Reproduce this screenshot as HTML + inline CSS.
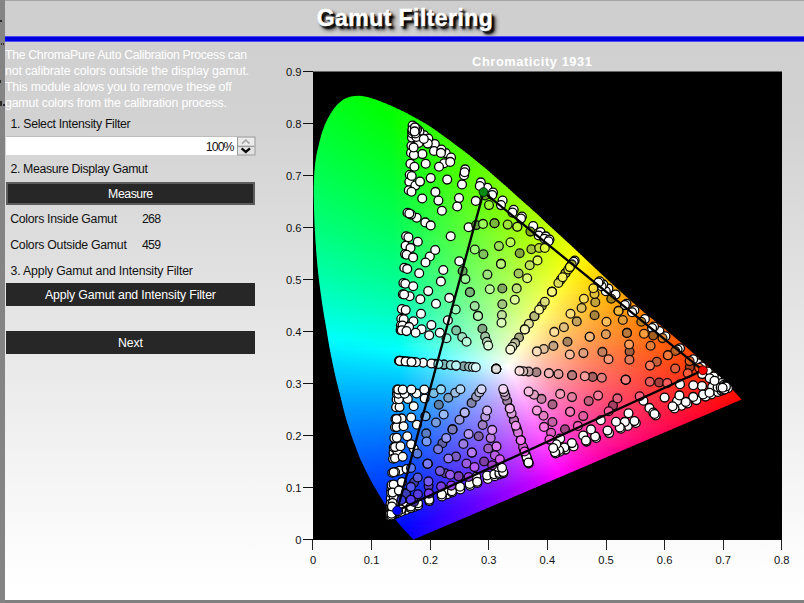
<!DOCTYPE html>
<html><head><meta charset="utf-8"><title>Gamut Filtering</title>
<style>
html,body{margin:0;padding:0}
body{width:804px;height:603px;position:relative;overflow:hidden;background:#808080;font-family:"Liberation Sans",sans-serif;font-size:12px;color:#111}
#panel{position:absolute;left:5px;top:0;width:799px;height:600px;background:linear-gradient(#a6a6a6 0,#a6a6a6 1px,#cecece 1px,#d0d0d0 40px,#d2d2d2 120px,#ffffff 585px)}
#lstrip{position:absolute;left:0;top:0;width:5px;height:603px;background:#848484}
#lstrip i{position:absolute;background:#2a2a2a;display:block}
#title{position:absolute;left:5px;top:5px;width:800px;text-align:center;font-weight:bold;font-size:23px;line-height:26px;color:#fff;-webkit-text-stroke:0.5px #fff;text-shadow:3px 3px 2px #000,4px 4px 4px rgba(0,0,0,.75),1px 1px 1px #000;letter-spacing:0.43px;white-space:nowrap}
#blue{position:absolute;left:5px;top:36px;width:799px;height:6px;background:linear-gradient(#8c8cf0,#0000ea 18%,#0000e6 34%,#0000c4 46%,#0000e6 60%,#0000ea 82%,#9a9af2)}
.t{position:absolute;white-space:nowrap;line-height:16px;font-size:12.3px}
.w{color:#fff}
.btn{position:absolute;left:6px;width:248.8px;height:22.4px;background:#272727;color:#fff;text-align:center;line-height:24.2px;font-size:12.3px;white-space:nowrap}
.btn span{display:inline-block}
.tk{font-family:"Liberation Sans",sans-serif;font-size:11.2px;fill:#111}
.ct{font-family:"Liberation Sans",sans-serif;font-size:12.8px;font-weight:bold;fill:#fff;letter-spacing:0.6px}
#spin{position:absolute;left:6px;top:136px;width:231px;height:19px;background:#fff;box-shadow:inset 0 1px 0 #bdbdbd}
</style></head><body>
<div id="lstrip"><i style="left:0;top:20px;width:2px;height:2px"></i><i style="left:1px;top:43px;width:1px;height:2px"></i><i style="left:3px;top:43px;width:1px;height:2px"></i><i style="left:0;top:80px;width:1px;height:3px"></i><i style="left:0;top:101px;width:2px;height:5px"></i><i style="left:3px;top:104px;width:2px;height:2px"></i></div>
<div id="panel"></div>
<div id="title">Gamut Filtering</div>
<div id="blue"></div>
<div class="t w" id="p1" style="letter-spacing:-0.324px;left:5px;top:47.2px">The ChromaPure Auto Calibration Process can</div>
<div class="t w" id="p2" style="letter-spacing:-0.117px;left:5px;top:63.3px">not calibrate colors outside the display gamut.</div>
<div class="t w" id="p3" style="letter-spacing:-0.170px;left:5px;top:79.3px">This module alows you to remove these off</div>
<div class="t w" id="p4" style="letter-spacing:-0.156px;left:5px;top:95.3px">gamut colors from the calibration process.</div>
<div class="t" id="l1" style="letter-spacing:-0.304px;left:10.5px;top:115.6px">1. Select Intensity Filter</div>
<div id="spin"><span class="t" id="pc" style="letter-spacing:-0.9px;left:199.8px;top:3px">100%</span></div>
<svg width="19" height="20" viewBox="0 0 19 20" style="position:absolute;left:236.5px;top:135.5px"><rect x="0.5" y="1" width="17.5" height="18" fill="#e2e2e2" stroke="#9c9c9c"/><rect x="1.5" y="2" width="15.5" height="7.5" fill="#ececec"/><line x1="1" y1="10.3" x2="17.5" y2="10.3" stroke="#8a8a8a" stroke-width="1"/><path d="M5 7.6 L8.8 4.2 L12.6 7.6" fill="none" stroke="#a8a8a8" stroke-width="1.7"/><path d="M4.6 12.3 L8.8 15.9 L13 12.3" fill="none" stroke="#0a0a0a" stroke-width="2.3"/></svg>
<div class="t" id="l2" style="letter-spacing:-0.352px;left:10.5px;top:161.4px">2. Measure Display Gamut</div>
<div class="btn" style="top:182.2px;box-shadow:inset 0 0 0 2px #5c5c5c, inset 0 1px 0 0 #8a8a8a;line-height:25px"><span id="b1" style="letter-spacing:-0.467px">Measure</span></div>
<div class="t" id="l3" style="letter-spacing:-0.289px;left:10.2px;top:210.7px">Colors Inside Gamut</div><div class="t" id="n1" style="letter-spacing:-0.750px;left:142px;top:210.7px">268</div>
<div class="t" id="l4" style="letter-spacing:-0.263px;left:10.2px;top:237px">Colors Outside Gamut</div><div class="t" id="n2" style="letter-spacing:-0.750px;left:142px;top:237px">459</div>
<div class="t" id="l5" style="letter-spacing:-0.162px;left:10.5px;top:263px">3. Apply Gamut and Intensity Filter</div>
<div class="btn" style="top:283.2px"><span id="b2" style="letter-spacing:-0.129px">Apply Gamut and Intensity Filter</span></div>
<div class="btn" style="top:331.2px"><span id="b3" style="letter-spacing:-0.167px">Next</span></div>
<svg width="804" height="603" viewBox="0 0 804 603" style="position:absolute;left:0;top:0"><rect x="313" y="71.5" width="469" height="468.5" fill="#000"/><defs><clipPath id="hs"><path d="M413.5 539.6 C411.1 536.9 403.7 529.7 398.8 523.6 C393.9 517.5 388.7 509.8 384.2 502.9 C379.7 496.0 375.6 489.1 371.8 482.2 C368.0 475.3 364.6 468.4 361.5 461.5 C358.4 454.6 355.4 446.0 353.4 440.7 C351.4 435.4 351.0 434.1 349.5 429.5 C348.0 424.9 346.0 418.4 344.5 412.9 C343.0 407.4 341.8 401.8 340.4 396.3 C339.0 390.8 337.5 385.3 336.2 379.8 C334.9 374.3 333.8 368.7 332.6 363.2 C331.5 357.7 330.3 352.1 329.3 346.6 C328.3 341.1 327.5 335.3 326.6 330.0 C325.7 324.7 324.8 319.9 323.9 314.6 C323.0 309.3 322.2 303.5 321.4 298.0 C320.6 292.5 319.9 287.0 319.2 281.5 C318.5 276.0 317.9 270.6 317.4 265.0 C316.9 259.4 316.4 253.5 316.0 248.0 C315.6 242.5 315.3 237.3 315.0 232.0 C314.7 226.7 314.5 221.7 314.3 216.0 C314.1 210.3 313.9 203.7 313.8 198.0 C313.7 192.3 313.7 187.1 313.9 182.0 C314.1 176.9 314.4 171.8 314.8 167.5 C315.2 163.2 315.7 159.6 316.3 156.0 C316.9 152.4 317.7 149.5 318.5 146.0 C319.3 142.5 320.1 138.7 321.2 135.2 C322.3 131.7 323.4 128.2 324.9 124.8 C326.3 121.4 328.0 118.0 329.9 114.9 C331.8 111.8 333.8 108.6 336.1 106.1 C338.4 103.5 341.1 101.2 343.6 99.6 C346.1 98.0 348.5 97.2 351.0 96.6 C353.5 96.0 356.0 95.8 358.5 95.8 C361.0 95.8 363.3 96.2 366.0 96.8 C368.7 97.4 371.6 98.3 374.7 99.3 C377.8 100.3 380.9 101.5 384.6 103.0 C388.3 104.5 392.9 106.6 397.1 108.6 C401.3 110.6 405.4 112.5 410.0 114.9 C414.6 117.3 420.3 120.5 424.9 123.2 C429.4 126.0 433.1 128.5 437.3 131.4 C441.5 134.3 445.7 137.3 449.8 140.4 C453.9 143.5 458.1 146.6 462.2 149.8 C466.3 153.0 470.5 156.2 474.6 159.5 C478.8 162.8 484.1 167.3 487.1 169.8 C490.1 172.3 489.4 171.8 492.4 174.4 C495.4 177.0 500.8 181.6 504.9 185.3 C509.0 189.0 513.1 192.7 517.3 196.4 C521.4 200.1 525.6 203.8 529.8 207.6 C533.9 211.3 537.2 214.3 542.2 218.9 C547.2 223.5 553.6 229.4 559.9 235.2 C566.2 241.0 573.2 247.5 579.8 253.7 C586.4 259.9 593.1 266.2 599.7 272.4 C606.3 278.6 613.0 284.8 619.6 290.8 C626.2 296.8 634.4 304.0 639.5 308.4 C644.6 312.8 646.2 314.1 650.0 317.2 C653.8 320.3 658.2 323.6 662.4 327.0 C666.5 330.4 670.8 333.9 674.9 337.4 C679.0 340.9 683.1 344.4 687.3 348.0 C691.4 351.6 695.6 355.2 699.8 358.9 C703.9 362.6 708.1 366.2 712.2 370.0 C716.3 373.8 721.1 378.1 724.6 381.5 C728.1 384.9 730.2 387.2 733.0 390.2 C735.8 393.2 740.2 398.0 741.6 399.6 Z"/></clipPath><linearGradient id="g0" gradientUnits="userSpaceOnUse" x1="348" x2="369" y1="0" y2="0"><stop offset="0" stop-color="#00ff0e"/><stop offset="1" stop-color="#00ff00"/></linearGradient><linearGradient id="g1" gradientUnits="userSpaceOnUse" x1="343" x2="376" y1="0" y2="0"><stop offset="0" stop-color="#00ff12"/><stop offset="1" stop-color="#00ff00"/></linearGradient><linearGradient id="g2" gradientUnits="userSpaceOnUse" x1="339" x2="382" y1="0" y2="0"><stop offset="0" stop-color="#00ff15"/><stop offset="1" stop-color="#00ff00"/></linearGradient><linearGradient id="g3" gradientUnits="userSpaceOnUse" x1="337" x2="387" y1="0" y2="0"><stop offset="0" stop-color="#00ff17"/><stop offset="1" stop-color="#00ff00"/></linearGradient><linearGradient id="g4" gradientUnits="userSpaceOnUse" x1="335" x2="392" y1="0" y2="0"><stop offset="0" stop-color="#00ff1a"/><stop offset="0.754" stop-color="#00ff00"/><stop offset="1" stop-color="#05ff00"/></linearGradient><linearGradient id="g5" gradientUnits="userSpaceOnUse" x1="333" x2="396" y1="0" y2="0"><stop offset="0" stop-color="#00ff1c"/><stop offset="0.889" stop-color="#00ff00"/><stop offset="1" stop-color="#0aff00"/></linearGradient><linearGradient id="g6" gradientUnits="userSpaceOnUse" x1="332" x2="400" y1="0" y2="0"><stop offset="0" stop-color="#00ff1e"/><stop offset="0.838" stop-color="#00ff00"/><stop offset="1" stop-color="#0eff00"/></linearGradient><linearGradient id="g7" gradientUnits="userSpaceOnUse" x1="330" x2="405" y1="0" y2="0"><stop offset="0" stop-color="#00ff20"/><stop offset="0.787" stop-color="#00ff00"/><stop offset="1" stop-color="#13ff00"/></linearGradient><linearGradient id="g8" gradientUnits="userSpaceOnUse" x1="329" x2="409" y1="0" y2="0"><stop offset="0" stop-color="#00ff22"/><stop offset="0.75" stop-color="#00ff00"/><stop offset="1" stop-color="#17ff00"/></linearGradient><linearGradient id="g9" gradientUnits="userSpaceOnUse" x1="327" x2="413" y1="0" y2="0"><stop offset="0" stop-color="#00ff24"/><stop offset="0.721" stop-color="#00ff01"/><stop offset="1" stop-color="#1bff00"/></linearGradient><linearGradient id="g10" gradientUnits="userSpaceOnUse" x1="326" x2="416" y1="0" y2="0"><stop offset="0" stop-color="#00ff26"/><stop offset="0.7" stop-color="#00ff03"/><stop offset="1" stop-color="#1eff00"/></linearGradient><linearGradient id="g11" gradientUnits="userSpaceOnUse" x1="325" x2="420" y1="0" y2="0"><stop offset="0" stop-color="#00ff27"/><stop offset="0.674" stop-color="#00ff05"/><stop offset="1" stop-color="#22ff00"/></linearGradient><linearGradient id="g12" gradientUnits="userSpaceOnUse" x1="324" x2="423" y1="0" y2="0"><stop offset="0" stop-color="#00ff29"/><stop offset="0.657" stop-color="#00ff07"/><stop offset="1" stop-color="#25ff00"/></linearGradient><linearGradient id="g13" gradientUnits="userSpaceOnUse" x1="323" x2="427" y1="0" y2="0"><stop offset="0" stop-color="#00ff2b"/><stop offset="0.635" stop-color="#00ff09"/><stop offset="0.74" stop-color="#0eff00"/><stop offset="1" stop-color="#29ff00"/></linearGradient><linearGradient id="g14" gradientUnits="userSpaceOnUse" x1="322" x2="430" y1="0" y2="0"><stop offset="0" stop-color="#00ff2c"/><stop offset="0.62" stop-color="#00ff0b"/><stop offset="0.741" stop-color="#10ff00"/><stop offset="1" stop-color="#2cff00"/></linearGradient><linearGradient id="g15" gradientUnits="userSpaceOnUse" x1="322" x2="433" y1="0" y2="0"><stop offset="0" stop-color="#00ff2e"/><stop offset="0.604" stop-color="#00ff0c"/><stop offset="0.748" stop-color="#13ff00"/><stop offset="1" stop-color="#2eff00"/></linearGradient><linearGradient id="g16" gradientUnits="userSpaceOnUse" x1="321" x2="436" y1="0" y2="0"><stop offset="0" stop-color="#00ff2f"/><stop offset="0.591" stop-color="#00ff0e"/><stop offset="0.748" stop-color="#16ff00"/><stop offset="1" stop-color="#31ff00"/></linearGradient><linearGradient id="g17" gradientUnits="userSpaceOnUse" x1="320" x2="439" y1="0" y2="0"><stop offset="0" stop-color="#00ff31"/><stop offset="0.58" stop-color="#00ff0f"/><stop offset="0.756" stop-color="#19ff00"/><stop offset="1" stop-color="#34ff00"/></linearGradient><linearGradient id="g18" gradientUnits="userSpaceOnUse" x1="319" x2="442" y1="0" y2="0"><stop offset="0" stop-color="#00ff33"/><stop offset="0.577" stop-color="#00ff10"/><stop offset="0.756" stop-color="#1bff00"/><stop offset="1" stop-color="#37ff00"/></linearGradient><linearGradient id="g19" gradientUnits="userSpaceOnUse" x1="319" x2="445" y1="0" y2="0"><stop offset="0" stop-color="#00ff34"/><stop offset="0.563" stop-color="#00ff12"/><stop offset="0.754" stop-color="#1dff00"/><stop offset="1" stop-color="#3aff00"/></linearGradient><linearGradient id="g20" gradientUnits="userSpaceOnUse" x1="318" x2="448" y1="0" y2="0"><stop offset="0" stop-color="#00ff36"/><stop offset="0.554" stop-color="#00ff13"/><stop offset="0.762" stop-color="#20ff00"/><stop offset="1" stop-color="#3dff00"/></linearGradient><linearGradient id="g21" gradientUnits="userSpaceOnUse" x1="318" x2="450" y1="0" y2="0"><stop offset="0" stop-color="#00ff37"/><stop offset="0.545" stop-color="#00ff15"/><stop offset="0.765" stop-color="#22ff00"/><stop offset="1" stop-color="#3fff00"/></linearGradient><linearGradient id="g22" gradientUnits="userSpaceOnUse" x1="317" x2="453" y1="0" y2="0"><stop offset="0" stop-color="#00ff39"/><stop offset="0.537" stop-color="#00ff17"/><stop offset="0.772" stop-color="#25ff00"/><stop offset="1" stop-color="#42ff00"/></linearGradient><linearGradient id="g23" gradientUnits="userSpaceOnUse" x1="317" x2="456" y1="0" y2="0"><stop offset="0" stop-color="#00ff3a"/><stop offset="0.525" stop-color="#00ff18"/><stop offset="0.77" stop-color="#27ff00"/><stop offset="1" stop-color="#45ff00"/></linearGradient><linearGradient id="g24" gradientUnits="userSpaceOnUse" x1="316" x2="458" y1="0" y2="0"><stop offset="0" stop-color="#00ff3c"/><stop offset="0.521" stop-color="#00ff1a"/><stop offset="0.782" stop-color="#2aff00"/><stop offset="1" stop-color="#47ff00"/></linearGradient><linearGradient id="g25" gradientUnits="userSpaceOnUse" x1="316" x2="461" y1="0" y2="0"><stop offset="0" stop-color="#00ff3d"/><stop offset="0.51" stop-color="#00ff1b"/><stop offset="0.779" stop-color="#2cff00"/><stop offset="1" stop-color="#4aff00"/></linearGradient><linearGradient id="g26" gradientUnits="userSpaceOnUse" x1="315" x2="464" y1="0" y2="0"><stop offset="0" stop-color="#00ff3f"/><stop offset="0.503" stop-color="#00ff1d"/><stop offset="0.785" stop-color="#2fff00"/><stop offset="1" stop-color="#4dff00"/></linearGradient><linearGradient id="g27" gradientUnits="userSpaceOnUse" x1="315" x2="466" y1="0" y2="0"><stop offset="0" stop-color="#00ff40"/><stop offset="0.497" stop-color="#00ff1e"/><stop offset="0.788" stop-color="#31ff00"/><stop offset="1" stop-color="#4fff00"/></linearGradient><linearGradient id="g28" gradientUnits="userSpaceOnUse" x1="314" x2="469" y1="0" y2="0"><stop offset="0" stop-color="#00ff42"/><stop offset="0.49" stop-color="#00ff20"/><stop offset="0.794" stop-color="#34ff00"/><stop offset="1" stop-color="#52ff00"/></linearGradient><linearGradient id="g29" gradientUnits="userSpaceOnUse" x1="314" x2="471" y1="0" y2="0"><stop offset="0" stop-color="#00ff43"/><stop offset="0.484" stop-color="#00ff21"/><stop offset="0.796" stop-color="#36ff00"/><stop offset="1" stop-color="#55ff00"/></linearGradient><linearGradient id="g30" gradientUnits="userSpaceOnUse" x1="314" x2="474" y1="0" y2="0"><stop offset="0" stop-color="#00ff45"/><stop offset="0.475" stop-color="#00ff23"/><stop offset="0.794" stop-color="#38ff00"/><stop offset="1" stop-color="#58ff00"/></linearGradient><linearGradient id="g31" gradientUnits="userSpaceOnUse" x1="313" x2="476" y1="0" y2="0"><stop offset="0" stop-color="#00ff47"/><stop offset="0.479" stop-color="#00ff24"/><stop offset="0.804" stop-color="#3bff00"/><stop offset="1" stop-color="#5aff00"/></linearGradient><linearGradient id="g32" gradientUnits="userSpaceOnUse" x1="313" x2="479" y1="0" y2="0"><stop offset="0" stop-color="#00ff48"/><stop offset="0.47" stop-color="#00ff25"/><stop offset="0.801" stop-color="#3eff00"/><stop offset="1" stop-color="#5dff00"/></linearGradient><linearGradient id="g33" gradientUnits="userSpaceOnUse" x1="313" x2="481" y1="0" y2="0"><stop offset="0" stop-color="#00ff49"/><stop offset="0.464" stop-color="#00ff27"/><stop offset="0.81" stop-color="#41ff00"/><stop offset="1" stop-color="#5fff00"/></linearGradient><linearGradient id="g34" gradientUnits="userSpaceOnUse" x1="313" x2="484" y1="0" y2="0"><stop offset="0" stop-color="#00ff4b"/><stop offset="0.456" stop-color="#00ff28"/><stop offset="0.807" stop-color="#43ff00"/><stop offset="1" stop-color="#63ff00"/></linearGradient><linearGradient id="g35" gradientUnits="userSpaceOnUse" x1="312" x2="486" y1="0" y2="0"><stop offset="0" stop-color="#00ff4d"/><stop offset="0.454" stop-color="#00ff2a"/><stop offset="0.816" stop-color="#46ff00"/><stop offset="1" stop-color="#65ff00"/></linearGradient><linearGradient id="g36" gradientUnits="userSpaceOnUse" x1="312" x2="489" y1="0" y2="0"><stop offset="0" stop-color="#00ff4e"/><stop offset="0.446" stop-color="#00ff2b"/><stop offset="0.814" stop-color="#48ff00"/><stop offset="1" stop-color="#68ff00"/></linearGradient><linearGradient id="g37" gradientUnits="userSpaceOnUse" x1="312" x2="491" y1="0" y2="0"><stop offset="0" stop-color="#00ff4f"/><stop offset="0.441" stop-color="#00ff2d"/><stop offset="0.821" stop-color="#4cff00"/><stop offset="1" stop-color="#6bff00"/></linearGradient><linearGradient id="g38" gradientUnits="userSpaceOnUse" x1="312" x2="493" y1="0" y2="0"><stop offset="0" stop-color="#00ff51"/><stop offset="0.436" stop-color="#00ff2e"/><stop offset="0.823" stop-color="#4eff00"/><stop offset="1" stop-color="#6dff00"/></linearGradient><linearGradient id="g39" gradientUnits="userSpaceOnUse" x1="312" x2="496" y1="0" y2="0"><stop offset="0" stop-color="#00ff52"/><stop offset="0.429" stop-color="#00ff30"/><stop offset="0.826" stop-color="#51ff00"/><stop offset="1" stop-color="#71ff00"/></linearGradient><linearGradient id="g40" gradientUnits="userSpaceOnUse" x1="312" x2="498" y1="0" y2="0"><stop offset="0" stop-color="#00ff54"/><stop offset="0.425" stop-color="#00ff31"/><stop offset="0.828" stop-color="#53ff00"/><stop offset="1" stop-color="#73ff00"/></linearGradient><linearGradient id="g41" gradientUnits="userSpaceOnUse" x1="312" x2="500" y1="0" y2="0"><stop offset="0" stop-color="#00ff55"/><stop offset="0.42" stop-color="#00ff33"/><stop offset="0.835" stop-color="#57ff00"/><stop offset="1" stop-color="#76ff00"/></linearGradient><linearGradient id="g42" gradientUnits="userSpaceOnUse" x1="311" x2="502" y1="0" y2="0"><stop offset="0" stop-color="#00ff57"/><stop offset="0.419" stop-color="#00ff35"/><stop offset="0.838" stop-color="#59ff00"/><stop offset="1" stop-color="#78ff00"/></linearGradient><linearGradient id="g43" gradientUnits="userSpaceOnUse" x1="311" x2="505" y1="0" y2="0"><stop offset="0" stop-color="#00ff58"/><stop offset="0.412" stop-color="#00ff36"/><stop offset="0.835" stop-color="#5cff00"/><stop offset="1" stop-color="#7cff00"/></linearGradient><linearGradient id="g44" gradientUnits="userSpaceOnUse" x1="311" x2="507" y1="0" y2="0"><stop offset="0" stop-color="#00ff5a"/><stop offset="0.413" stop-color="#00ff37"/><stop offset="0.842" stop-color="#5fff00"/><stop offset="1" stop-color="#7fff00"/></linearGradient><linearGradient id="g45" gradientUnits="userSpaceOnUse" x1="311" x2="509" y1="0" y2="0"><stop offset="0" stop-color="#00ff5b"/><stop offset="0.409" stop-color="#00ff39"/><stop offset="0.843" stop-color="#61ff00"/><stop offset="1" stop-color="#81ff00"/></linearGradient><linearGradient id="g46" gradientUnits="userSpaceOnUse" x1="311" x2="512" y1="0" y2="0"><stop offset="0" stop-color="#00ff5d"/><stop offset="0.403" stop-color="#00ff3a"/><stop offset="0.846" stop-color="#65ff00"/><stop offset="1" stop-color="#85ff00"/></linearGradient><linearGradient id="g47" gradientUnits="userSpaceOnUse" x1="311" x2="514" y1="0" y2="0"><stop offset="0" stop-color="#00ff5e"/><stop offset="0.399" stop-color="#00ff3c"/><stop offset="0.67" stop-color="#42ff1e"/><stop offset="0.847" stop-color="#68ff00"/><stop offset="1" stop-color="#88ff00"/></linearGradient><linearGradient id="g48" gradientUnits="userSpaceOnUse" x1="311" x2="516" y1="0" y2="0"><stop offset="0" stop-color="#00ff60"/><stop offset="0.395" stop-color="#00ff3e"/><stop offset="0.854" stop-color="#6bff00"/><stop offset="1" stop-color="#8bff00"/></linearGradient><linearGradient id="g49" gradientUnits="userSpaceOnUse" x1="311" x2="518" y1="0" y2="0"><stop offset="0" stop-color="#00ff61"/><stop offset="0.391" stop-color="#00ff3f"/><stop offset="0.662" stop-color="#44ff21"/><stop offset="0.855" stop-color="#6eff00"/><stop offset="1" stop-color="#8eff00"/></linearGradient><linearGradient id="g50" gradientUnits="userSpaceOnUse" x1="311" x2="520" y1="0" y2="0"><stop offset="0" stop-color="#00ff63"/><stop offset="0.388" stop-color="#00ff41"/><stop offset="0.684" stop-color="#4aff1f"/><stop offset="0.861" stop-color="#71ff00"/><stop offset="1" stop-color="#90ff00"/></linearGradient><linearGradient id="g51" gradientUnits="userSpaceOnUse" x1="311" x2="523" y1="0" y2="0"><stop offset="0" stop-color="#00ff65"/><stop offset="0.382" stop-color="#00ff43"/><stop offset="0.651" stop-color="#45ff24"/><stop offset="0.858" stop-color="#74ff00"/><stop offset="1" stop-color="#94ff00"/></linearGradient><linearGradient id="g52" gradientUnits="userSpaceOnUse" x1="311" x2="525" y1="0" y2="0"><stop offset="0" stop-color="#00ff66"/><stop offset="0.379" stop-color="#00ff44"/><stop offset="0.673" stop-color="#4cff22"/><stop offset="0.864" stop-color="#78ff00"/><stop offset="1" stop-color="#97ff00"/></linearGradient><linearGradient id="g53" gradientUnits="userSpaceOnUse" x1="311" x2="527" y1="0" y2="0"><stop offset="0" stop-color="#00ff68"/><stop offset="0.375" stop-color="#00ff46"/><stop offset="0.644" stop-color="#47ff27"/><stop offset="0.866" stop-color="#7bff00"/><stop offset="1" stop-color="#9aff00"/></linearGradient><linearGradient id="g54" gradientUnits="userSpaceOnUse" x1="311" x2="529" y1="0" y2="0"><stop offset="0" stop-color="#00ff69"/><stop offset="0.372" stop-color="#00ff48"/><stop offset="0.651" stop-color="#4bff27"/><stop offset="0.872" stop-color="#7fff00"/><stop offset="1" stop-color="#9eff00"/></linearGradient><linearGradient id="g55" gradientUnits="userSpaceOnUse" x1="311" x2="532" y1="0" y2="0"><stop offset="0" stop-color="#00ff6b"/><stop offset="0.367" stop-color="#00ff49"/><stop offset="0.67" stop-color="#51ff25"/><stop offset="0.869" stop-color="#81ff00"/><stop offset="1" stop-color="#a2ff00"/></linearGradient><linearGradient id="g56" gradientUnits="userSpaceOnUse" x1="312" x2="534" y1="0" y2="0"><stop offset="0" stop-color="#00ff6c"/><stop offset="0.36" stop-color="#00ff4b"/><stop offset="0.689" stop-color="#58ff23"/><stop offset="0.869" stop-color="#84ff00"/><stop offset="1" stop-color="#a5ff00"/></linearGradient><linearGradient id="g57" gradientUnits="userSpaceOnUse" x1="312" x2="536" y1="0" y2="0"><stop offset="0" stop-color="#00ff6e"/><stop offset="0.357" stop-color="#00ff4d"/><stop offset="0.647" stop-color="#50ff2a"/><stop offset="0.875" stop-color="#88ff00"/><stop offset="1" stop-color="#a8ff00"/></linearGradient><linearGradient id="g58" gradientUnits="userSpaceOnUse" x1="312" x2="538" y1="0" y2="0"><stop offset="0" stop-color="#00ff6f"/><stop offset="0.358" stop-color="#00ff4e"/><stop offset="0.708" stop-color="#61ff22"/><stop offset="0.876" stop-color="#8bff00"/><stop offset="1" stop-color="#abff00"/></linearGradient><linearGradient id="g59" gradientUnits="userSpaceOnUse" x1="312" x2="540" y1="0" y2="0"><stop offset="0" stop-color="#00ff71"/><stop offset="0.355" stop-color="#00ff50"/><stop offset="0.662" stop-color="#57ff2a"/><stop offset="0.882" stop-color="#8fff00"/><stop offset="1" stop-color="#afff00"/></linearGradient><linearGradient id="g60" gradientUnits="userSpaceOnUse" x1="312" x2="543" y1="0" y2="0"><stop offset="0" stop-color="#00ff73"/><stop offset="0.351" stop-color="#00ff52"/><stop offset="0.706" stop-color="#65ff24"/><stop offset="0.879" stop-color="#93ff00"/><stop offset="1" stop-color="#b3ff00"/></linearGradient><linearGradient id="g61" gradientUnits="userSpaceOnUse" x1="312" x2="545" y1="0" y2="0"><stop offset="0" stop-color="#00ff74"/><stop offset="0.348" stop-color="#00ff53"/><stop offset="0.661" stop-color="#5cff2c"/><stop offset="0.884" stop-color="#97ff00"/><stop offset="1" stop-color="#b7ff00"/></linearGradient><linearGradient id="g62" gradientUnits="userSpaceOnUse" x1="312" x2="547" y1="0" y2="0"><stop offset="0" stop-color="#00ff76"/><stop offset="0.345" stop-color="#00ff55"/><stop offset="0.694" stop-color="#66ff28"/><stop offset="0.885" stop-color="#9aff00"/><stop offset="1" stop-color="#baff00"/></linearGradient><linearGradient id="g63" gradientUnits="userSpaceOnUse" x1="312" x2="549" y1="0" y2="0"><stop offset="0" stop-color="#00ff78"/><stop offset="0.342" stop-color="#00ff57"/><stop offset="0.688" stop-color="#67ff2a"/><stop offset="0.89" stop-color="#9fff00"/><stop offset="1" stop-color="#beff00"/></linearGradient><linearGradient id="g64" gradientUnits="userSpaceOnUse" x1="312" x2="551" y1="0" y2="0"><stop offset="0" stop-color="#00ff7a"/><stop offset="0.339" stop-color="#00ff59"/><stop offset="0.695" stop-color="#6bff2a"/><stop offset="0.891" stop-color="#a2ff00"/><stop offset="1" stop-color="#c2ff00"/></linearGradient><linearGradient id="g65" gradientUnits="userSpaceOnUse" x1="312" x2="553" y1="0" y2="0"><stop offset="0" stop-color="#00ff7b"/><stop offset="0.336" stop-color="#00ff5b"/><stop offset="0.701" stop-color="#6fff2a"/><stop offset="0.896" stop-color="#a6ff00"/><stop offset="1" stop-color="#c5ff00"/></linearGradient><linearGradient id="g66" gradientUnits="userSpaceOnUse" x1="312" x2="556" y1="0" y2="0"><stop offset="0" stop-color="#00ff7d"/><stop offset="0.332" stop-color="#00ff5c"/><stop offset="0.693" stop-color="#6fff2c"/><stop offset="0.893" stop-color="#aaff00"/><stop offset="1" stop-color="#caff00"/></linearGradient><linearGradient id="g67" gradientUnits="userSpaceOnUse" x1="312" x2="558" y1="0" y2="0"><stop offset="0" stop-color="#00ff7f"/><stop offset="0.329" stop-color="#00ff5e"/><stop offset="0.699" stop-color="#73ff2c"/><stop offset="0.894" stop-color="#adff00"/><stop offset="1" stop-color="#ceff00"/></linearGradient><linearGradient id="g68" gradientUnits="userSpaceOnUse" x1="312" x2="560" y1="0" y2="0"><stop offset="0" stop-color="#00ff81"/><stop offset="0.327" stop-color="#00ff60"/><stop offset="0.706" stop-color="#78ff2c"/><stop offset="0.899" stop-color="#b2ff00"/><stop offset="1" stop-color="#d2ff00"/></linearGradient><linearGradient id="g69" gradientUnits="userSpaceOnUse" x1="313" x2="562" y1="0" y2="0"><stop offset="0" stop-color="#00ff82"/><stop offset="0.321" stop-color="#00ff62"/><stop offset="0.711" stop-color="#7cff2c"/><stop offset="0.9" stop-color="#b6ff00"/><stop offset="1" stop-color="#d6ff00"/></linearGradient><linearGradient id="g70" gradientUnits="userSpaceOnUse" x1="313" x2="564" y1="0" y2="0"><stop offset="0" stop-color="#00ff84"/><stop offset="0.319" stop-color="#00ff64"/><stop offset="0.689" stop-color="#78ff31"/><stop offset="0.904" stop-color="#bbff00"/><stop offset="1" stop-color="#daff00"/></linearGradient><linearGradient id="g71" gradientUnits="userSpaceOnUse" x1="313" x2="566" y1="0" y2="0"><stop offset="0" stop-color="#00ff86"/><stop offset="0.32" stop-color="#00ff65"/><stop offset="0.407" stop-color="#23ff5b"/><stop offset="0.696" stop-color="#7cff31"/><stop offset="0.905" stop-color="#bfff00"/><stop offset="1" stop-color="#deff00"/></linearGradient><linearGradient id="g72" gradientUnits="userSpaceOnUse" x1="313" x2="569" y1="0" y2="0"><stop offset="0" stop-color="#00ff88"/><stop offset="0.316" stop-color="#00ff67"/><stop offset="0.414" stop-color="#27ff5b"/><stop offset="0.711" stop-color="#84ff2f"/><stop offset="0.906" stop-color="#c4ff00"/><stop offset="1" stop-color="#e4ff00"/></linearGradient><linearGradient id="g73" gradientUnits="userSpaceOnUse" x1="313" x2="571" y1="0" y2="0"><stop offset="0" stop-color="#00ff89"/><stop offset="0.314" stop-color="#00ff69"/><stop offset="0.434" stop-color="#2fff5a"/><stop offset="0.69" stop-color="#80ff34"/><stop offset="0.907" stop-color="#c8ff00"/><stop offset="1" stop-color="#e8ff00"/></linearGradient><linearGradient id="g74" gradientUnits="userSpaceOnUse" x1="313" x2="573" y1="0" y2="0"><stop offset="0" stop-color="#00ff8b"/><stop offset="0.312" stop-color="#00ff6b"/><stop offset="0.404" stop-color="#26ff60"/><stop offset="0.708" stop-color="#88ff32"/><stop offset="0.912" stop-color="#cdff00"/><stop offset="1" stop-color="#edff00"/></linearGradient><linearGradient id="g75" gradientUnits="userSpaceOnUse" x1="313" x2="575" y1="0" y2="0"><stop offset="0" stop-color="#00ff8d"/><stop offset="0.309" stop-color="#00ff6d"/><stop offset="0.687" stop-color="#84ff37"/><stop offset="0.912" stop-color="#d1ff00"/><stop offset="1" stop-color="#f1ff00"/></linearGradient><linearGradient id="g76" gradientUnits="userSpaceOnUse" x1="313" x2="577" y1="0" y2="0"><stop offset="0" stop-color="#00ff8f"/><stop offset="0.307" stop-color="#00ff6f"/><stop offset="0.667" stop-color="#80ff3c"/><stop offset="0.917" stop-color="#d7ff00"/><stop offset="1" stop-color="#f6ff00"/></linearGradient><linearGradient id="g77" gradientUnits="userSpaceOnUse" x1="314" x2="579" y1="0" y2="0"><stop offset="0" stop-color="#00ff91"/><stop offset="0.302" stop-color="#00ff71"/><stop offset="0.389" stop-color="#25ff67"/><stop offset="0.694" stop-color="#8cff38"/><stop offset="0.917" stop-color="#dbff00"/><stop offset="1" stop-color="#fbff00"/></linearGradient><linearGradient id="g78" gradientUnits="userSpaceOnUse" x1="314" x2="582" y1="0" y2="0"><stop offset="0" stop-color="#00ff93"/><stop offset="0.299" stop-color="#00ff73"/><stop offset="0.683" stop-color="#8cff3b"/><stop offset="0.918" stop-color="#e1ff00"/><stop offset="1" stop-color="#fffd00"/></linearGradient><linearGradient id="g79" gradientUnits="userSpaceOnUse" x1="314" x2="584" y1="0" y2="0"><stop offset="0" stop-color="#00ff95"/><stop offset="0.296" stop-color="#00ff76"/><stop offset="0.674" stop-color="#8bff3e"/><stop offset="0.919" stop-color="#e5ff00"/><stop offset="1" stop-color="#fff800"/></linearGradient><linearGradient id="g80" gradientUnits="userSpaceOnUse" x1="314" x2="586" y1="0" y2="0"><stop offset="0" stop-color="#00ff97"/><stop offset="0.294" stop-color="#00ff78"/><stop offset="0.702" stop-color="#98ff3a"/><stop offset="0.919" stop-color="#eaff00"/><stop offset="0.971" stop-color="#ffff00"/><stop offset="1" stop-color="#fff300"/></linearGradient><linearGradient id="g81" gradientUnits="userSpaceOnUse" x1="314" x2="588" y1="0" y2="0"><stop offset="0" stop-color="#00ff99"/><stop offset="0.292" stop-color="#00ff7a"/><stop offset="0.635" stop-color="#82ff48"/><stop offset="0.825" stop-color="#c9ff20"/><stop offset="0.923" stop-color="#f0ff00"/><stop offset="0.96" stop-color="#ffff00"/><stop offset="1" stop-color="#ffef00"/></linearGradient><linearGradient id="g82" gradientUnits="userSpaceOnUse" x1="314" x2="590" y1="0" y2="0"><stop offset="0" stop-color="#00ff9b"/><stop offset="0.29" stop-color="#00ff7c"/><stop offset="0.659" stop-color="#8eff45"/><stop offset="0.946" stop-color="#feff00"/><stop offset="1" stop-color="#ffea00"/></linearGradient><linearGradient id="g83" gradientUnits="userSpaceOnUse" x1="315" x2="592" y1="0" y2="0"><stop offset="0" stop-color="#00ff9d"/><stop offset="0.285" stop-color="#00ff7e"/><stop offset="0.697" stop-color="#9fff3f"/><stop offset="0.935" stop-color="#ffff00"/><stop offset="1" stop-color="#ffe600"/></linearGradient><linearGradient id="g84" gradientUnits="userSpaceOnUse" x1="315" x2="594" y1="0" y2="0"><stop offset="0" stop-color="#00ff9f"/><stop offset="0.287" stop-color="#00ff80"/><stop offset="0.358" stop-color="#23ff77"/><stop offset="0.674" stop-color="#99ff45"/><stop offset="0.81" stop-color="#cfff27"/><stop offset="0.925" stop-color="#ffff02"/><stop offset="1" stop-color="#ffe100"/></linearGradient><linearGradient id="g85" gradientUnits="userSpaceOnUse" x1="315" x2="596" y1="0" y2="0"><stop offset="0" stop-color="#00ffa1"/><stop offset="0.285" stop-color="#00ff82"/><stop offset="0.363" stop-color="#26ff78"/><stop offset="0.676" stop-color="#9dff46"/><stop offset="0.911" stop-color="#feff09"/><stop offset="0.932" stop-color="#fff700"/><stop offset="1" stop-color="#ffdd00"/></linearGradient><linearGradient id="g86" gradientUnits="userSpaceOnUse" x1="315" x2="599" y1="0" y2="0"><stop offset="0" stop-color="#00ffa3"/><stop offset="0.282" stop-color="#00ff84"/><stop offset="0.366" stop-color="#29ff79"/><stop offset="0.641" stop-color="#93ff4e"/><stop offset="0.894" stop-color="#fdff0f"/><stop offset="0.93" stop-color="#fff200"/><stop offset="1" stop-color="#ffd700"/></linearGradient><linearGradient id="g87" gradientUnits="userSpaceOnUse" x1="315" x2="601" y1="0" y2="0"><stop offset="0" stop-color="#00ffa5"/><stop offset="0.28" stop-color="#00ff87"/><stop offset="0.371" stop-color="#2cff7b"/><stop offset="0.664" stop-color="#9fff4b"/><stop offset="0.888" stop-color="#ffff12"/><stop offset="0.934" stop-color="#ffec00"/><stop offset="1" stop-color="#ffd300"/></linearGradient><linearGradient id="g88" gradientUnits="userSpaceOnUse" x1="316" x2="603" y1="0" y2="0"><stop offset="0" stop-color="#00ffa7"/><stop offset="0.275" stop-color="#00ff89"/><stop offset="0.373" stop-color="#2fff7c"/><stop offset="0.592" stop-color="#85ff5a"/><stop offset="0.878" stop-color="#ffff17"/><stop offset="0.934" stop-color="#ffe700"/><stop offset="1" stop-color="#ffcf00"/></linearGradient><linearGradient id="g89" gradientUnits="userSpaceOnUse" x1="316" x2="605" y1="0" y2="0"><stop offset="0" stop-color="#00ffa9"/><stop offset="0.273" stop-color="#00ff8b"/><stop offset="0.353" stop-color="#28ff81"/><stop offset="0.602" stop-color="#8cff5a"/><stop offset="0.865" stop-color="#feff1c"/><stop offset="0.938" stop-color="#ffe100"/><stop offset="1" stop-color="#ffcb00"/></linearGradient><linearGradient id="g90" gradientUnits="userSpaceOnUse" x1="316" x2="607" y1="0" y2="0"><stop offset="0" stop-color="#00ffab"/><stop offset="0.271" stop-color="#00ff8e"/><stop offset="0.612" stop-color="#93ff5a"/><stop offset="0.852" stop-color="#fdff21"/><stop offset="0.938" stop-color="#ffdd00"/><stop offset="1" stop-color="#ffc700"/></linearGradient><linearGradient id="g91" gradientUnits="userSpaceOnUse" x1="316" x2="609" y1="0" y2="0"><stop offset="0" stop-color="#00ffae"/><stop offset="0.27" stop-color="#00ff90"/><stop offset="0.621" stop-color="#99ff5a"/><stop offset="0.846" stop-color="#ffff24"/><stop offset="0.939" stop-color="#ffd800"/><stop offset="1" stop-color="#ffc300"/></linearGradient><linearGradient id="g92" gradientUnits="userSpaceOnUse" x1="316" x2="612" y1="0" y2="0"><stop offset="0" stop-color="#00ffb0"/><stop offset="0.267" stop-color="#00ff92"/><stop offset="0.581" stop-color="#8cff63"/><stop offset="0.834" stop-color="#ffff28"/><stop offset="0.939" stop-color="#ffd300"/><stop offset="1" stop-color="#ffbe00"/></linearGradient><linearGradient id="g93" gradientUnits="userSpaceOnUse" x1="317" x2="614" y1="0" y2="0"><stop offset="0" stop-color="#00ffb2"/><stop offset="0.263" stop-color="#00ff95"/><stop offset="0.579" stop-color="#8eff65"/><stop offset="0.822" stop-color="#feff2d"/><stop offset="0.939" stop-color="#ffce00"/><stop offset="1" stop-color="#ffba00"/></linearGradient><linearGradient id="g94" gradientUnits="userSpaceOnUse" x1="317" x2="616" y1="0" y2="0"><stop offset="0" stop-color="#00ffb4"/><stop offset="0.261" stop-color="#00ff97"/><stop offset="0.552" stop-color="#85ff6c"/><stop offset="0.809" stop-color="#fdff32"/><stop offset="0.943" stop-color="#ffc900"/><stop offset="1" stop-color="#ffb600"/></linearGradient><linearGradient id="g95" gradientUnits="userSpaceOnUse" x1="317" x2="618" y1="0" y2="0"><stop offset="0" stop-color="#00ffb6"/><stop offset="0.259" stop-color="#00ff9a"/><stop offset="0.568" stop-color="#8fff6b"/><stop offset="0.804" stop-color="#ffff35"/><stop offset="0.944" stop-color="#ffc500"/><stop offset="1" stop-color="#ffb300"/></linearGradient><linearGradient id="g96" gradientUnits="userSpaceOnUse" x1="317" x2="620" y1="0" y2="0"><stop offset="0" stop-color="#00ffb9"/><stop offset="0.257" stop-color="#00ff9c"/><stop offset="0.558" stop-color="#8dff6f"/><stop offset="0.795" stop-color="#ffff39"/><stop offset="0.947" stop-color="#ffbf00"/><stop offset="1" stop-color="#ffaf00"/></linearGradient><linearGradient id="g97" gradientUnits="userSpaceOnUse" x1="318" x2="622" y1="0" y2="0"><stop offset="0" stop-color="#00ffbb"/><stop offset="0.257" stop-color="#01ff9e"/><stop offset="0.546" stop-color="#8bff73"/><stop offset="0.783" stop-color="#feff3e"/><stop offset="0.947" stop-color="#ffbb00"/><stop offset="1" stop-color="#ffab00"/></linearGradient><linearGradient id="g98" gradientUnits="userSpaceOnUse" x1="318" x2="625" y1="0" y2="0"><stop offset="0" stop-color="#00ffbd"/><stop offset="0.254" stop-color="#00ffa1"/><stop offset="0.329" stop-color="#2bff97"/><stop offset="0.534" stop-color="#89ff77"/><stop offset="0.772" stop-color="#feff42"/><stop offset="0.948" stop-color="#ffb600"/><stop offset="1" stop-color="#ffa700"/></linearGradient><linearGradient id="g99" gradientUnits="userSpaceOnUse" x1="318" x2="627" y1="0" y2="0"><stop offset="0" stop-color="#00ffc0"/><stop offset="0.252" stop-color="#00ffa4"/><stop offset="0.32" stop-color="#28ff9b"/><stop offset="0.524" stop-color="#87ff7b"/><stop offset="0.764" stop-color="#ffff46"/><stop offset="0.948" stop-color="#ffb300"/><stop offset="1" stop-color="#ffa300"/></linearGradient><linearGradient id="g100" gradientUnits="userSpaceOnUse" x1="319" x2="629" y1="0" y2="0"><stop offset="0" stop-color="#00ffc2"/><stop offset="0.248" stop-color="#00ffa6"/><stop offset="0.326" stop-color="#2dff9c"/><stop offset="0.513" stop-color="#85ff7f"/><stop offset="0.755" stop-color="#ffff4a"/><stop offset="0.848" stop-color="#ffd225"/><stop offset="0.952" stop-color="#ffae00"/><stop offset="1" stop-color="#ffa000"/></linearGradient><linearGradient id="g101" gradientUnits="userSpaceOnUse" x1="319" x2="631" y1="0" y2="0"><stop offset="0" stop-color="#00ffc5"/><stop offset="0.247" stop-color="#00ffa9"/><stop offset="0.317" stop-color="#2affa0"/><stop offset="0.526" stop-color="#8dff7f"/><stop offset="0.744" stop-color="#feff4f"/><stop offset="0.843" stop-color="#ffd028"/><stop offset="0.952" stop-color="#ffaa00"/><stop offset="1" stop-color="#ff9c00"/></linearGradient><linearGradient id="g102" gradientUnits="userSpaceOnUse" x1="319" x2="634" y1="0" y2="0"><stop offset="0" stop-color="#00ffc7"/><stop offset="0.244" stop-color="#00ffac"/><stop offset="0.324" stop-color="#2fffa1"/><stop offset="0.521" stop-color="#8eff82"/><stop offset="0.733" stop-color="#feff53"/><stop offset="0.835" stop-color="#ffce2a"/><stop offset="0.949" stop-color="#ffa600"/><stop offset="1" stop-color="#ff9800"/></linearGradient><linearGradient id="g103" gradientUnits="userSpaceOnUse" x1="319" x2="636" y1="0" y2="0"><stop offset="0" stop-color="#00ffca"/><stop offset="0.243" stop-color="#00ffaf"/><stop offset="0.517" stop-color="#90ff85"/><stop offset="0.726" stop-color="#ffff57"/><stop offset="0.83" stop-color="#ffcc2c"/><stop offset="0.953" stop-color="#ffa200"/><stop offset="1" stop-color="#ff9400"/></linearGradient><linearGradient id="g104" gradientUnits="userSpaceOnUse" x1="320" x2="638" y1="0" y2="0"><stop offset="0" stop-color="#00ffcc"/><stop offset="0.239" stop-color="#00ffb1"/><stop offset="0.491" stop-color="#85ff8c"/><stop offset="0.717" stop-color="#ffff5b"/><stop offset="0.824" stop-color="#ffca2f"/><stop offset="0.953" stop-color="#ff9e00"/><stop offset="1" stop-color="#ff9100"/></linearGradient><linearGradient id="g105" gradientUnits="userSpaceOnUse" x1="320" x2="640" y1="0" y2="0"><stop offset="0" stop-color="#00ffcf"/><stop offset="0.237" stop-color="#00ffb4"/><stop offset="0.494" stop-color="#8aff8e"/><stop offset="0.706" stop-color="#feff60"/><stop offset="0.819" stop-color="#ffc831"/><stop offset="0.953" stop-color="#ff9a01"/><stop offset="1" stop-color="#ff8e00"/></linearGradient><linearGradient id="g106" gradientUnits="userSpaceOnUse" x1="320" x2="643" y1="0" y2="0"><stop offset="0" stop-color="#00ffd1"/><stop offset="0.235" stop-color="#00ffb7"/><stop offset="0.495" stop-color="#8eff90"/><stop offset="0.697" stop-color="#feff64"/><stop offset="0.811" stop-color="#ffc633"/><stop offset="0.954" stop-color="#ff9600"/><stop offset="1" stop-color="#ff8a00"/></linearGradient><linearGradient id="g107" gradientUnits="userSpaceOnUse" x1="321" x2="645" y1="0" y2="0"><stop offset="0" stop-color="#00ffd4"/><stop offset="0.235" stop-color="#01ffba"/><stop offset="0.29" stop-color="#26ffb2"/><stop offset="0.497" stop-color="#92ff92"/><stop offset="0.688" stop-color="#ffff68"/><stop offset="0.806" stop-color="#ffc436"/><stop offset="0.954" stop-color="#ff9301"/><stop offset="1" stop-color="#ff8600"/></linearGradient><linearGradient id="g108" gradientUnits="userSpaceOnUse" x1="321" x2="647" y1="0" y2="0"><stop offset="0" stop-color="#00ffd7"/><stop offset="0.233" stop-color="#01ffbd"/><stop offset="0.485" stop-color="#8fff97"/><stop offset="0.681" stop-color="#ffff6c"/><stop offset="0.828" stop-color="#ffb72e"/><stop offset="0.957" stop-color="#ff8e00"/><stop offset="1" stop-color="#ff8300"/></linearGradient><linearGradient id="g109" gradientUnits="userSpaceOnUse" x1="321" x2="650" y1="0" y2="0"><stop offset="0" stop-color="#00ffd9"/><stop offset="0.231" stop-color="#01ffc0"/><stop offset="0.465" stop-color="#87ff9d"/><stop offset="0.669" stop-color="#feff71"/><stop offset="0.821" stop-color="#ffb530"/><stop offset="0.957" stop-color="#ff8a00"/><stop offset="1" stop-color="#ff7f00"/></linearGradient><linearGradient id="g110" gradientUnits="userSpaceOnUse" x1="321" x2="652" y1="0" y2="0"><stop offset="0" stop-color="#00ffdc"/><stop offset="0.23" stop-color="#01ffc3"/><stop offset="0.447" stop-color="#80ffa3"/><stop offset="0.662" stop-color="#feff76"/><stop offset="0.801" stop-color="#ffb938"/><stop offset="0.958" stop-color="#ff8700"/><stop offset="1" stop-color="#ff7c00"/></linearGradient><linearGradient id="g111" gradientUnits="userSpaceOnUse" x1="322" x2="655" y1="0" y2="0"><stop offset="0" stop-color="#00ffdf"/><stop offset="0.225" stop-color="#00ffc6"/><stop offset="0.273" stop-color="#23ffc0"/><stop offset="0.471" stop-color="#92ffa1"/><stop offset="0.652" stop-color="#ffff7a"/><stop offset="0.811" stop-color="#ffb033"/><stop offset="0.958" stop-color="#ff8300"/><stop offset="1" stop-color="#ff7900"/></linearGradient><linearGradient id="g112" gradientUnits="userSpaceOnUse" x1="322" x2="657" y1="0" y2="0"><stop offset="0" stop-color="#00ffe2"/><stop offset="0.224" stop-color="#00ffc9"/><stop offset="0.275" stop-color="#25ffc2"/><stop offset="0.466" stop-color="#91ffa5"/><stop offset="0.645" stop-color="#fffe7e"/><stop offset="0.806" stop-color="#ffae35"/><stop offset="0.958" stop-color="#ff8000"/><stop offset="1" stop-color="#ff7600"/></linearGradient><linearGradient id="g113" gradientUnits="userSpaceOnUse" x1="323" x2="660" y1="0" y2="0"><stop offset="0" stop-color="#00ffe5"/><stop offset="0.22" stop-color="#00ffcc"/><stop offset="0.273" stop-color="#27ffc5"/><stop offset="0.463" stop-color="#94ffa8"/><stop offset="0.635" stop-color="#fffe83"/><stop offset="0.798" stop-color="#ffac38"/><stop offset="0.955" stop-color="#ff7c00"/><stop offset="1" stop-color="#ff7200"/></linearGradient><linearGradient id="g114" gradientUnits="userSpaceOnUse" x1="323" x2="662" y1="0" y2="0"><stop offset="0" stop-color="#00ffe8"/><stop offset="0.218" stop-color="#00ffd0"/><stop offset="0.274" stop-color="#29ffc8"/><stop offset="0.469" stop-color="#9bffaa"/><stop offset="0.625" stop-color="#ffff88"/><stop offset="0.714" stop-color="#ffcc5a"/><stop offset="0.794" stop-color="#ffaa3a"/><stop offset="0.959" stop-color="#ff7900"/><stop offset="1" stop-color="#ff6f00"/></linearGradient><linearGradient id="g115" gradientUnits="userSpaceOnUse" x1="323" x2="665" y1="0" y2="0"><stop offset="0" stop-color="#00ffeb"/><stop offset="0.216" stop-color="#00ffd3"/><stop offset="0.617" stop-color="#ffff8d"/><stop offset="0.693" stop-color="#ffd163"/><stop offset="0.787" stop-color="#ffa83c"/><stop offset="0.956" stop-color="#ff7500"/><stop offset="1" stop-color="#ff6b00"/></linearGradient><linearGradient id="g116" gradientUnits="userSpaceOnUse" x1="324" x2="667" y1="0" y2="0"><stop offset="0" stop-color="#00ffed"/><stop offset="0.213" stop-color="#00ffd6"/><stop offset="0.446" stop-color="#95ffb4"/><stop offset="0.609" stop-color="#fffe91"/><stop offset="0.688" stop-color="#ffcf66"/><stop offset="0.778" stop-color="#ffa73f"/><stop offset="0.959" stop-color="#ff7200"/><stop offset="1" stop-color="#ff6800"/></linearGradient><linearGradient id="g117" gradientUnits="userSpaceOnUse" x1="324" x2="670" y1="0" y2="0"><stop offset="0" stop-color="#00fff1"/><stop offset="0.211" stop-color="#00ffda"/><stop offset="0.601" stop-color="#fffe96"/><stop offset="0.673" stop-color="#ffd16c"/><stop offset="0.772" stop-color="#ffa541"/><stop offset="0.957" stop-color="#ff6f00"/><stop offset="1" stop-color="#ff6500"/></linearGradient><linearGradient id="g118" gradientUnits="userSpaceOnUse" x1="324" x2="672" y1="0" y2="0"><stop offset="0" stop-color="#00fff4"/><stop offset="0.21" stop-color="#00ffdd"/><stop offset="0.592" stop-color="#ffff9c"/><stop offset="0.658" stop-color="#ffd574"/><stop offset="0.767" stop-color="#ffa343"/><stop offset="0.96" stop-color="#ff6b00"/><stop offset="1" stop-color="#ff6200"/></linearGradient><linearGradient id="g119" gradientUnits="userSpaceOnUse" x1="325" x2="675" y1="0" y2="0"><stop offset="0" stop-color="#00fff7"/><stop offset="0.206" stop-color="#00ffe1"/><stop offset="0.583" stop-color="#ffffa1"/><stop offset="0.654" stop-color="#ffd175"/><stop offset="0.757" stop-color="#ffa246"/><stop offset="0.957" stop-color="#ff6800"/><stop offset="1" stop-color="#ff5f00"/></linearGradient><linearGradient id="g120" gradientUnits="userSpaceOnUse" x1="325" x2="677" y1="0" y2="0"><stop offset="0" stop-color="#00fffa"/><stop offset="0.205" stop-color="#00ffe4"/><stop offset="0.418" stop-color="#91ffc6"/><stop offset="0.577" stop-color="#fffea5"/><stop offset="0.653" stop-color="#ffcd76"/><stop offset="0.75" stop-color="#ffa149"/><stop offset="0.96" stop-color="#ff6400"/><stop offset="1" stop-color="#ff5c00"/></linearGradient><linearGradient id="g121" gradientUnits="userSpaceOnUse" x1="325" x2="679" y1="0" y2="0"><stop offset="0" stop-color="#00fffd"/><stop offset="0.206" stop-color="#01ffe8"/><stop offset="0.571" stop-color="#fffeaa"/><stop offset="0.638" stop-color="#ffd17e"/><stop offset="0.746" stop-color="#ff9f4c"/><stop offset="0.96" stop-color="#ff6100"/><stop offset="1" stop-color="#ff5900"/></linearGradient><linearGradient id="g122" gradientUnits="userSpaceOnUse" x1="326" x2="682" y1="0" y2="0"><stop offset="0" stop-color="#00feff"/><stop offset="0.202" stop-color="#01ffeb"/><stop offset="0.559" stop-color="#ffffb0"/><stop offset="0.635" stop-color="#ffcd7f"/><stop offset="0.736" stop-color="#ff9e4f"/><stop offset="0.961" stop-color="#ff5e00"/><stop offset="1" stop-color="#ff5600"/></linearGradient><linearGradient id="g123" gradientUnits="userSpaceOnUse" x1="326" x2="684" y1="0" y2="0"><stop offset="0" stop-color="#00faff"/><stop offset="0.201" stop-color="#01ffef"/><stop offset="0.553" stop-color="#ffffb5"/><stop offset="0.634" stop-color="#ffc980"/><stop offset="0.729" stop-color="#ff9d52"/><stop offset="0.961" stop-color="#ff5b00"/><stop offset="1" stop-color="#ff5300"/></linearGradient><linearGradient id="g124" gradientUnits="userSpaceOnUse" x1="326" x2="686" y1="0" y2="0"><stop offset="0" stop-color="#00f7ff"/><stop offset="0.2" stop-color="#00fff3"/><stop offset="0.239" stop-color="#23ffee"/><stop offset="0.547" stop-color="#fffeba"/><stop offset="0.633" stop-color="#ffc580"/><stop offset="0.722" stop-color="#ff9c55"/><stop offset="0.961" stop-color="#ff5800"/><stop offset="1" stop-color="#ff5000"/></linearGradient><linearGradient id="g125" gradientUnits="userSpaceOnUse" x1="327" x2="689" y1="0" y2="0"><stop offset="0" stop-color="#00f4ff"/><stop offset="0.196" stop-color="#00fff7"/><stop offset="0.232" stop-color="#21fff3"/><stop offset="0.539" stop-color="#fffebf"/><stop offset="0.61" stop-color="#ffcc8c"/><stop offset="0.71" stop-color="#ff9c59"/><stop offset="0.826" stop-color="#ff752d"/><stop offset="0.961" stop-color="#ff5500"/><stop offset="1" stop-color="#ff4d00"/></linearGradient><linearGradient id="g126" gradientUnits="userSpaceOnUse" x1="327" x2="691" y1="0" y2="0"><stop offset="0" stop-color="#00f1ff"/><stop offset="0.195" stop-color="#00fffb"/><stop offset="0.53" stop-color="#ffffc6"/><stop offset="0.604" stop-color="#ffcb90"/><stop offset="0.703" stop-color="#ff9b5d"/><stop offset="0.832" stop-color="#ff702c"/><stop offset="0.962" stop-color="#ff5200"/><stop offset="1" stop-color="#ff4a00"/></linearGradient><linearGradient id="g127" gradientUnits="userSpaceOnUse" x1="327" x2="693" y1="0" y2="0"><stop offset="0" stop-color="#00edff"/><stop offset="0.194" stop-color="#00ffff"/><stop offset="0.525" stop-color="#ffffcb"/><stop offset="0.59" stop-color="#ffcf9a"/><stop offset="0.694" stop-color="#ff9b61"/><stop offset="0.814" stop-color="#ff7232"/><stop offset="0.964" stop-color="#ff4f00"/><stop offset="1" stop-color="#ff4800"/></linearGradient><linearGradient id="g128" gradientUnits="userSpaceOnUse" x1="328" x2="696" y1="0" y2="0"><stop offset="0" stop-color="#00eaff"/><stop offset="0.19" stop-color="#00fbff"/><stop offset="0.315" stop-color="#64fff4"/><stop offset="0.516" stop-color="#fffed1"/><stop offset="0.601" stop-color="#ffc391"/><stop offset="0.709" stop-color="#ff9159"/><stop offset="0.818" stop-color="#ff6d30"/><stop offset="0.962" stop-color="#ff4c00"/><stop offset="1" stop-color="#ff4500"/></linearGradient><linearGradient id="g129" gradientUnits="userSpaceOnUse" x1="328" x2="698" y1="0" y2="0"><stop offset="0" stop-color="#00e7ff"/><stop offset="0.189" stop-color="#00f7ff"/><stop offset="0.303" stop-color="#5dfffa"/><stop offset="0.511" stop-color="#fffdd6"/><stop offset="0.595" stop-color="#ffc295"/><stop offset="0.705" stop-color="#ff8f5b"/><stop offset="0.832" stop-color="#ff662c"/><stop offset="0.965" stop-color="#ff4900"/><stop offset="1" stop-color="#ff4200"/></linearGradient><linearGradient id="g130" gradientUnits="userSpaceOnUse" x1="328" x2="700" y1="0" y2="0"><stop offset="0" stop-color="#00e4ff"/><stop offset="0.188" stop-color="#00f3ff"/><stop offset="0.298" stop-color="#5bffff"/><stop offset="0.503" stop-color="#ffffdd"/><stop offset="0.589" stop-color="#ffc199"/><stop offset="0.702" stop-color="#ff8c5d"/><stop offset="0.817" stop-color="#ff6731"/><stop offset="0.965" stop-color="#ff4600"/><stop offset="1" stop-color="#ff3f00"/></linearGradient><linearGradient id="g131" gradientUnits="userSpaceOnUse" x1="329" x2="702" y1="0" y2="0"><stop offset="0" stop-color="#00e1ff"/><stop offset="0.185" stop-color="#00efff"/><stop offset="0.33" stop-color="#77ffff"/><stop offset="0.496" stop-color="#ffffe3"/><stop offset="0.582" stop-color="#ffc09d"/><stop offset="0.684" stop-color="#ff8f65"/><stop offset="0.82" stop-color="#ff6330"/><stop offset="0.968" stop-color="#ff4300"/><stop offset="1" stop-color="#ff3d00"/></linearGradient><linearGradient id="g132" gradientUnits="userSpaceOnUse" x1="329" x2="705" y1="0" y2="0"><stop offset="0" stop-color="#00deff"/><stop offset="0.184" stop-color="#00ebff"/><stop offset="0.362" stop-color="#93ffff"/><stop offset="0.489" stop-color="#fffee8"/><stop offset="0.585" stop-color="#ffb99a"/><stop offset="0.689" stop-color="#ff8962"/><stop offset="0.822" stop-color="#ff5f2f"/><stop offset="0.965" stop-color="#ff4000"/><stop offset="1" stop-color="#ff3a00"/></linearGradient><linearGradient id="g133" gradientUnits="userSpaceOnUse" x1="330" x2="707" y1="0" y2="0"><stop offset="0" stop-color="#00dbff"/><stop offset="0.18" stop-color="#00e7ff"/><stop offset="0.393" stop-color="#b1ffff"/><stop offset="0.483" stop-color="#fffdee"/><stop offset="0.565" stop-color="#ffc0a7"/><stop offset="0.684" stop-color="#ff8764"/><stop offset="0.798" stop-color="#ff6238"/><stop offset="0.968" stop-color="#ff3d00"/><stop offset="1" stop-color="#ff3700"/></linearGradient><linearGradient id="g134" gradientUnits="userSpaceOnUse" x1="330" x2="709" y1="0" y2="0"><stop offset="0" stop-color="#00d8ff"/><stop offset="0.182" stop-color="#01e4ff"/><stop offset="0.354" stop-color="#8ef5ff"/><stop offset="0.475" stop-color="#fffff6"/><stop offset="0.573" stop-color="#ffb7a2"/><stop offset="0.681" stop-color="#ff8566"/><stop offset="0.802" stop-color="#ff5e37"/><stop offset="0.968" stop-color="#ff3a00"/><stop offset="1" stop-color="#ff3400"/></linearGradient><linearGradient id="g135" gradientUnits="userSpaceOnUse" x1="330" x2="711" y1="0" y2="0"><stop offset="0" stop-color="#00d5ff"/><stop offset="0.181" stop-color="#01e0ff"/><stop offset="0.365" stop-color="#98f2ff"/><stop offset="0.47" stop-color="#fffefc"/><stop offset="0.564" stop-color="#ffb8a8"/><stop offset="0.675" stop-color="#ff8469"/><stop offset="0.806" stop-color="#ff5a36"/><stop offset="0.969" stop-color="#ff3700"/><stop offset="1" stop-color="#ff3200"/></linearGradient><linearGradient id="g136" gradientUnits="userSpaceOnUse" x1="331" x2="714" y1="0" y2="0"><stop offset="0" stop-color="#00d2ff"/><stop offset="0.178" stop-color="#01dcff"/><stop offset="0.355" stop-color="#92ecff"/><stop offset="0.465" stop-color="#fffbff"/><stop offset="0.556" stop-color="#ffb6ac"/><stop offset="0.668" stop-color="#ff816b"/><stop offset="0.838" stop-color="#ff4f2a"/><stop offset="0.969" stop-color="#ff3400"/><stop offset="1" stop-color="#ff2f00"/></linearGradient><linearGradient id="g137" gradientUnits="userSpaceOnUse" x1="331" x2="716" y1="0" y2="0"><stop offset="0" stop-color="#00cfff"/><stop offset="0.177" stop-color="#01d9ff"/><stop offset="0.366" stop-color="#9ce9ff"/><stop offset="0.465" stop-color="#fff6ff"/><stop offset="0.564" stop-color="#ffaea7"/><stop offset="0.675" stop-color="#ff7b68"/><stop offset="0.816" stop-color="#ff5132"/><stop offset="0.969" stop-color="#ff3200"/><stop offset="1" stop-color="#ff2c00"/></linearGradient><linearGradient id="g138" gradientUnits="userSpaceOnUse" x1="332" x2="718" y1="0" y2="0"><stop offset="0" stop-color="#00cdff"/><stop offset="0.174" stop-color="#00d5ff"/><stop offset="0.358" stop-color="#96e4ff"/><stop offset="0.464" stop-color="#fff0ff"/><stop offset="0.557" stop-color="#ffadab"/><stop offset="0.671" stop-color="#ff796a"/><stop offset="0.821" stop-color="#ff4d30"/><stop offset="0.972" stop-color="#ff2f00"/><stop offset="1" stop-color="#ff2a00"/></linearGradient><linearGradient id="g139" gradientUnits="userSpaceOnUse" x1="332" x2="720" y1="0" y2="0"><stop offset="0" stop-color="#00caff"/><stop offset="0.173" stop-color="#00d2ff"/><stop offset="0.369" stop-color="#a0e0ff"/><stop offset="0.464" stop-color="#ffeafe"/><stop offset="0.549" stop-color="#ffadb1"/><stop offset="0.665" stop-color="#ff786d"/><stop offset="0.822" stop-color="#ff4a30"/><stop offset="0.972" stop-color="#ff2c00"/><stop offset="1" stop-color="#ff2700"/></linearGradient><linearGradient id="g140" gradientUnits="userSpaceOnUse" x1="333" x2="722" y1="0" y2="0"><stop offset="0" stop-color="#00c7ff"/><stop offset="0.17" stop-color="#00ceff"/><stop offset="0.35" stop-color="#91daff"/><stop offset="0.463" stop-color="#ffe5fe"/><stop offset="0.558" stop-color="#ffa3aa"/><stop offset="0.671" stop-color="#ff726a"/><stop offset="0.838" stop-color="#ff432b"/><stop offset="0.974" stop-color="#ff2900"/><stop offset="1" stop-color="#ff2500"/></linearGradient><linearGradient id="g141" gradientUnits="userSpaceOnUse" x1="333" x2="724" y1="0" y2="0"><stop offset="0" stop-color="#00c4ff"/><stop offset="0.169" stop-color="#00cbff"/><stop offset="0.363" stop-color="#9dd7ff"/><stop offset="0.463" stop-color="#ffdffe"/><stop offset="0.552" stop-color="#ffa2ae"/><stop offset="0.655" stop-color="#ff7472"/><stop offset="0.808" stop-color="#ff4735"/><stop offset="0.974" stop-color="#ff2600"/><stop offset="1" stop-color="#ff2200"/></linearGradient><linearGradient id="g142" gradientUnits="userSpaceOnUse" x1="334" x2="727" y1="0" y2="0"><stop offset="0" stop-color="#00c1ff"/><stop offset="0.165" stop-color="#00c7ff"/><stop offset="0.351" stop-color="#95d2ff"/><stop offset="0.461" stop-color="#ffdafe"/><stop offset="0.557" stop-color="#ff9aa9"/><stop offset="0.672" stop-color="#ff6a69"/><stop offset="0.822" stop-color="#ff4130"/><stop offset="0.975" stop-color="#ff2300"/><stop offset="1" stop-color="#ff1f00"/></linearGradient><linearGradient id="g143" gradientUnits="userSpaceOnUse" x1="334" x2="729" y1="0" y2="0"><stop offset="0" stop-color="#00bfff"/><stop offset="0.165" stop-color="#00c4ff"/><stop offset="0.354" stop-color="#98cdff"/><stop offset="0.461" stop-color="#ffd5fe"/><stop offset="0.552" stop-color="#ff99ad"/><stop offset="0.666" stop-color="#ff696c"/><stop offset="0.823" stop-color="#ff3e30"/><stop offset="0.975" stop-color="#ff2100"/><stop offset="1" stop-color="#ff1c00"/></linearGradient><linearGradient id="g144" gradientUnits="userSpaceOnUse" x1="335" x2="730" y1="0" y2="0"><stop offset="0" stop-color="#00bcff"/><stop offset="0.162" stop-color="#00c1ff"/><stop offset="0.359" stop-color="#9dcaff"/><stop offset="0.461" stop-color="#ffd0fe"/><stop offset="0.547" stop-color="#ff97b1"/><stop offset="0.661" stop-color="#ff676f"/><stop offset="0.825" stop-color="#ff3b30"/><stop offset="1" stop-color="#ff1a00"/></linearGradient><linearGradient id="g145" gradientUnits="userSpaceOnUse" x1="335" x2="732" y1="0" y2="0"><stop offset="0" stop-color="#00b9ff"/><stop offset="0.161" stop-color="#00bdff"/><stop offset="0.348" stop-color="#93c5ff"/><stop offset="0.461" stop-color="#ffcafd"/><stop offset="0.554" stop-color="#ff8fac"/><stop offset="0.67" stop-color="#ff616b"/><stop offset="0.826" stop-color="#ff3830"/><stop offset="1" stop-color="#ff1700"/></linearGradient><linearGradient id="g146" gradientUnits="userSpaceOnUse" x1="336" x2="734" y1="0" y2="0"><stop offset="0" stop-color="#00b6ff"/><stop offset="0.158" stop-color="#00baff"/><stop offset="0.349" stop-color="#96c1ff"/><stop offset="0.46" stop-color="#ffc5fd"/><stop offset="0.548" stop-color="#ff8eb0"/><stop offset="0.663" stop-color="#ff5f6e"/><stop offset="0.814" stop-color="#ff3734"/><stop offset="1" stop-color="#ff1500"/></linearGradient><linearGradient id="g147" gradientUnits="userSpaceOnUse" x1="336" x2="736" y1="0" y2="0"><stop offset="0" stop-color="#00b4ff"/><stop offset="0.16" stop-color="#01b7ff"/><stop offset="0.355" stop-color="#9bbdff"/><stop offset="0.46" stop-color="#ffc0fd"/><stop offset="0.545" stop-color="#ff8bb2"/><stop offset="0.657" stop-color="#ff5e71"/><stop offset="0.815" stop-color="#ff3434"/><stop offset="1" stop-color="#ff1200"/></linearGradient><linearGradient id="g148" gradientUnits="userSpaceOnUse" x1="337" x2="738" y1="0" y2="0"><stop offset="0" stop-color="#00b1ff"/><stop offset="0.157" stop-color="#01b4ff"/><stop offset="0.359" stop-color="#a0b9ff"/><stop offset="0.459" stop-color="#ffbbfd"/><stop offset="0.559" stop-color="#ff80a8"/><stop offset="0.663" stop-color="#ff586e"/><stop offset="0.815" stop-color="#ff3134"/><stop offset="1" stop-color="#ff0f00"/></linearGradient><linearGradient id="g149" gradientUnits="userSpaceOnUse" x1="337" x2="740" y1="0" y2="0"><stop offset="0" stop-color="#00aeff"/><stop offset="0.156" stop-color="#01b0ff"/><stop offset="0.34" stop-color="#90b4ff"/><stop offset="0.459" stop-color="#ffb6fd"/><stop offset="0.546" stop-color="#ff82b1"/><stop offset="0.658" stop-color="#ff5771"/><stop offset="0.804" stop-color="#ff3138"/><stop offset="1" stop-color="#ff0c00"/></linearGradient><linearGradient id="g150" gradientUnits="userSpaceOnUse" x1="338" x2="742" y1="0" y2="0"><stop offset="0" stop-color="#00acff"/><stop offset="0.153" stop-color="#01adff"/><stop offset="0.347" stop-color="#97b0ff"/><stop offset="0.455" stop-color="#ffb3ff"/><stop offset="0.542" stop-color="#ff80b3"/><stop offset="0.666" stop-color="#ff516d"/><stop offset="0.792" stop-color="#ff303c"/><stop offset="1" stop-color="#ff0900"/></linearGradient><linearGradient id="g151" gradientUnits="userSpaceOnUse" x1="338" x2="744" y1="0" y2="0"><stop offset="0" stop-color="#00a9ff"/><stop offset="0.153" stop-color="#00aaff"/><stop offset="0.355" stop-color="#9eacff"/><stop offset="0.456" stop-color="#ffaeff"/><stop offset="0.547" stop-color="#ff7ab0"/><stop offset="0.658" stop-color="#ff5071"/><stop offset="0.793" stop-color="#ff2d3c"/><stop offset="1" stop-color="#ff0600"/></linearGradient><linearGradient id="g152" gradientUnits="userSpaceOnUse" x1="339" x2="744" y1="0" y2="0"><stop offset="0" stop-color="#00a7ff"/><stop offset="0.151" stop-color="#00a7ff"/><stop offset="0.363" stop-color="#a5a8ff"/><stop offset="0.457" stop-color="#ffa9ff"/><stop offset="0.546" stop-color="#ff77b2"/><stop offset="0.652" stop-color="#ff4f75"/><stop offset="0.785" stop-color="#ff2d40"/><stop offset="1" stop-color="#ff0300"/></linearGradient><linearGradient id="g153" gradientUnits="userSpaceOnUse" x1="339" x2="741" y1="0" y2="0"><stop offset="0" stop-color="#00a4ff"/><stop offset="0.152" stop-color="#00a4ff"/><stop offset="0.376" stop-color="#aca4ff"/><stop offset="0.463" stop-color="#ffa4ff"/><stop offset="0.54" stop-color="#ff79bb"/><stop offset="0.654" stop-color="#ff4e78"/><stop offset="0.781" stop-color="#ff2d45"/><stop offset="1" stop-color="#ff0203"/></linearGradient><linearGradient id="g154" gradientUnits="userSpaceOnUse" x1="340" x2="736" y1="0" y2="0"><stop offset="0" stop-color="#00a1ff"/><stop offset="0.152" stop-color="#00a1ff"/><stop offset="0.361" stop-color="#9ca0ff"/><stop offset="0.47" stop-color="#ff9fff"/><stop offset="0.556" stop-color="#ff72b6"/><stop offset="0.672" stop-color="#ff4875"/><stop offset="0.813" stop-color="#ff263f"/><stop offset="1" stop-color="#ff0209"/></linearGradient><linearGradient id="g155" gradientUnits="userSpaceOnUse" x1="340" x2="731" y1="0" y2="0"><stop offset="0" stop-color="#009fff"/><stop offset="0.153" stop-color="#009eff"/><stop offset="0.381" stop-color="#a79cff"/><stop offset="0.478" stop-color="#ff9bff"/><stop offset="0.57" stop-color="#ff6cb3"/><stop offset="0.678" stop-color="#ff4778"/><stop offset="0.816" stop-color="#ff2543"/><stop offset="1" stop-color="#ff020e"/></linearGradient><linearGradient id="g156" gradientUnits="userSpaceOnUse" x1="341" x2="727" y1="0" y2="0"><stop offset="0" stop-color="#009cff"/><stop offset="0.153" stop-color="#009bff"/><stop offset="0.339" stop-color="#8499ff"/><stop offset="0.484" stop-color="#ff96fe"/><stop offset="0.575" stop-color="#ff69b5"/><stop offset="0.679" stop-color="#ff467c"/><stop offset="0.816" stop-color="#ff2547"/><stop offset="1" stop-color="#ff0113"/></linearGradient><linearGradient id="g157" gradientUnits="userSpaceOnUse" x1="341" x2="722" y1="0" y2="0"><stop offset="0" stop-color="#009aff"/><stop offset="0.155" stop-color="#0098ff"/><stop offset="0.344" stop-color="#8395ff"/><stop offset="0.493" stop-color="#ff91fe"/><stop offset="0.583" stop-color="#ff66b7"/><stop offset="0.698" stop-color="#ff4179"/><stop offset="0.816" stop-color="#ff254c"/><stop offset="1" stop-color="#ff0118"/></linearGradient><linearGradient id="g158" gradientUnits="userSpaceOnUse" x1="342" x2="717" y1="0" y2="0"><stop offset="0" stop-color="#0097ff"/><stop offset="0.155" stop-color="#0095ff"/><stop offset="0.371" stop-color="#9391ff"/><stop offset="0.501" stop-color="#ff8cfe"/><stop offset="0.589" stop-color="#ff64b9"/><stop offset="0.691" stop-color="#ff4382"/><stop offset="0.835" stop-color="#ff214b"/><stop offset="1" stop-color="#ff011d"/></linearGradient><linearGradient id="g159" gradientUnits="userSpaceOnUse" x1="342" x2="713" y1="0" y2="0"><stop offset="0" stop-color="#0095ff"/><stop offset="0.156" stop-color="#0092ff"/><stop offset="0.369" stop-color="#8e8dff"/><stop offset="0.509" stop-color="#ff88fe"/><stop offset="0.596" stop-color="#ff61bb"/><stop offset="0.706" stop-color="#ff3e80"/><stop offset="0.833" stop-color="#ff2150"/><stop offset="1" stop-color="#ff0021"/></linearGradient><linearGradient id="g160" gradientUnits="userSpaceOnUse" x1="343" x2="708" y1="0" y2="0"><stop offset="0" stop-color="#0092ff"/><stop offset="0.159" stop-color="#0190ff"/><stop offset="0.37" stop-color="#8b8aff"/><stop offset="0.518" stop-color="#ff83fe"/><stop offset="0.603" stop-color="#ff5ebd"/><stop offset="0.712" stop-color="#ff3c83"/><stop offset="0.833" stop-color="#ff2155"/><stop offset="1" stop-color="#ff0026"/></linearGradient><linearGradient id="g161" gradientUnits="userSpaceOnUse" x1="343" x2="703" y1="0" y2="0"><stop offset="0" stop-color="#0090ff"/><stop offset="0.161" stop-color="#018dff"/><stop offset="0.4" stop-color="#9b85ff"/><stop offset="0.528" stop-color="#ff7ffe"/><stop offset="0.611" stop-color="#ff5bbf"/><stop offset="0.731" stop-color="#ff3881"/><stop offset="0.856" stop-color="#ff1c53"/><stop offset="1" stop-color="#ff002b"/></linearGradient><linearGradient id="g162" gradientUnits="userSpaceOnUse" x1="344" x2="699" y1="0" y2="0"><stop offset="0" stop-color="#008eff"/><stop offset="0.161" stop-color="#018aff"/><stop offset="0.397" stop-color="#9682ff"/><stop offset="0.535" stop-color="#ff7afe"/><stop offset="0.617" stop-color="#ff58c1"/><stop offset="0.713" stop-color="#ff3b8e"/><stop offset="0.851" stop-color="#ff1c59"/><stop offset="1" stop-color="#ff002f"/></linearGradient><linearGradient id="g163" gradientUnits="userSpaceOnUse" x1="344" x2="694" y1="0" y2="0"><stop offset="0" stop-color="#008bff"/><stop offset="0.163" stop-color="#0187ff"/><stop offset="0.397" stop-color="#917fff"/><stop offset="0.546" stop-color="#ff75fd"/><stop offset="0.626" stop-color="#ff56c3"/><stop offset="0.72" stop-color="#ff3a91"/><stop offset="0.837" stop-color="#ff1f63"/><stop offset="1" stop-color="#ff0034"/></linearGradient><linearGradient id="g164" gradientUnits="userSpaceOnUse" x1="345" x2="689" y1="0" y2="0"><stop offset="0" stop-color="#0089ff"/><stop offset="0.163" stop-color="#0084ff"/><stop offset="0.398" stop-color="#8e7bff"/><stop offset="0.555" stop-color="#ff71fd"/><stop offset="0.645" stop-color="#ff4fbe"/><stop offset="0.747" stop-color="#ff338b"/><stop offset="1" stop-color="#ff0039"/></linearGradient><linearGradient id="g165" gradientUnits="userSpaceOnUse" x1="346" x2="685" y1="0" y2="0"><stop offset="0" stop-color="#0086ff"/><stop offset="0.162" stop-color="#0082ff"/><stop offset="0.422" stop-color="#9a77ff"/><stop offset="0.563" stop-color="#ff6cfd"/><stop offset="0.652" stop-color="#ff4cc0"/><stop offset="0.752" stop-color="#ff318e"/><stop offset="1" stop-color="#ff003e"/></linearGradient><linearGradient id="g166" gradientUnits="userSpaceOnUse" x1="346" x2="680" y1="0" y2="0"><stop offset="0" stop-color="#0084ff"/><stop offset="0.165" stop-color="#007fff"/><stop offset="0.422" stop-color="#9574ff"/><stop offset="0.575" stop-color="#ff68fd"/><stop offset="0.662" stop-color="#ff49c2"/><stop offset="0.76" stop-color="#ff2f91"/><stop offset="1" stop-color="#ff0043"/></linearGradient><linearGradient id="g167" gradientUnits="userSpaceOnUse" x1="347" x2="675" y1="0" y2="0"><stop offset="0" stop-color="#0081ff"/><stop offset="0.165" stop-color="#007cff"/><stop offset="0.445" stop-color="#9f6fff"/><stop offset="0.582" stop-color="#ff65ff"/><stop offset="0.659" stop-color="#ff4acb"/><stop offset="0.75" stop-color="#ff319c"/><stop offset="1" stop-color="#ff0048"/></linearGradient><linearGradient id="g168" gradientUnits="userSpaceOnUse" x1="348" x2="671" y1="0" y2="0"><stop offset="0" stop-color="#007fff"/><stop offset="0.164" stop-color="#007aff"/><stop offset="0.446" stop-color="#9c6cff"/><stop offset="0.591" stop-color="#ff60ff"/><stop offset="0.681" stop-color="#ff42c4"/><stop offset="0.765" stop-color="#ff2d9b"/><stop offset="1" stop-color="#ff004d"/></linearGradient><linearGradient id="g169" gradientUnits="userSpaceOnUse" x1="348" x2="666" y1="0" y2="0"><stop offset="0" stop-color="#007dff"/><stop offset="0.167" stop-color="#0077ff"/><stop offset="0.45" stop-color="#9969ff"/><stop offset="0.604" stop-color="#ff5cff"/><stop offset="0.679" stop-color="#ff43cd"/><stop offset="0.783" stop-color="#ff299a"/><stop offset="1" stop-color="#ff0052"/></linearGradient><linearGradient id="g170" gradientUnits="userSpaceOnUse" x1="349" x2="661" y1="0" y2="0"><stop offset="0" stop-color="#007aff"/><stop offset="0.167" stop-color="#0074ff"/><stop offset="0.452" stop-color="#9665ff"/><stop offset="0.615" stop-color="#ff57ff"/><stop offset="0.689" stop-color="#ff40cf"/><stop offset="0.776" stop-color="#ff2aa4"/><stop offset="1" stop-color="#ff0058"/></linearGradient><linearGradient id="g171" gradientUnits="userSpaceOnUse" x1="350" x2="656" y1="0" y2="0"><stop offset="0" stop-color="#0078ff"/><stop offset="0.167" stop-color="#0072ff"/><stop offset="0.454" stop-color="#9362ff"/><stop offset="0.627" stop-color="#ff53ff"/><stop offset="0.778" stop-color="#ff2aaa"/><stop offset="1" stop-color="#ff005e"/></linearGradient><linearGradient id="g172" gradientUnits="userSpaceOnUse" x1="350" x2="652" y1="0" y2="0"><stop offset="0" stop-color="#0076ff"/><stop offset="0.169" stop-color="#006fff"/><stop offset="0.46" stop-color="#925fff"/><stop offset="0.639" stop-color="#ff4fff"/><stop offset="0.795" stop-color="#ff25a9"/><stop offset="1" stop-color="#ff0063"/></linearGradient><linearGradient id="g173" gradientUnits="userSpaceOnUse" x1="351" x2="647" y1="0" y2="0"><stop offset="0" stop-color="#0073ff"/><stop offset="0.172" stop-color="#016dff"/><stop offset="0.48" stop-color="#985bff"/><stop offset="0.652" stop-color="#ff4aff"/><stop offset="0.797" stop-color="#ff24af"/><stop offset="1" stop-color="#ff0069"/></linearGradient><linearGradient id="g174" gradientUnits="userSpaceOnUse" x1="352" x2="642" y1="0" y2="0"><stop offset="0" stop-color="#0071ff"/><stop offset="0.172" stop-color="#016aff"/><stop offset="0.5" stop-color="#9e56ff"/><stop offset="0.662" stop-color="#fd46ff"/><stop offset="0.824" stop-color="#ff1eab"/><stop offset="1" stop-color="#ff006f"/></linearGradient><linearGradient id="g175" gradientUnits="userSpaceOnUse" x1="353" x2="638" y1="0" y2="0"><stop offset="0" stop-color="#006fff"/><stop offset="0.172" stop-color="#0168ff"/><stop offset="0.502" stop-color="#9b53ff"/><stop offset="0.674" stop-color="#fd42ff"/><stop offset="0.842" stop-color="#ff1aaa"/><stop offset="1" stop-color="#ff0075"/></linearGradient><linearGradient id="g176" gradientUnits="userSpaceOnUse" x1="353" x2="633" y1="0" y2="0"><stop offset="0" stop-color="#006cff"/><stop offset="0.175" stop-color="#0165ff"/><stop offset="0.525" stop-color="#a14fff"/><stop offset="0.689" stop-color="#fe3eff"/><stop offset="0.818" stop-color="#ff1fbc"/><stop offset="0.964" stop-color="#ff0086"/><stop offset="1" stop-color="#ff007b"/></linearGradient><linearGradient id="g177" gradientUnits="userSpaceOnUse" x1="354" x2="628" y1="0" y2="0"><stop offset="0" stop-color="#006aff"/><stop offset="0.175" stop-color="#0063ff"/><stop offset="0.529" stop-color="#9e4cff"/><stop offset="0.704" stop-color="#fe39ff"/><stop offset="0.825" stop-color="#ff1dc1"/><stop offset="0.964" stop-color="#ff008e"/><stop offset="1" stop-color="#ff0082"/></linearGradient><linearGradient id="g178" gradientUnits="userSpaceOnUse" x1="355" x2="624" y1="0" y2="0"><stop offset="0" stop-color="#0068ff"/><stop offset="0.175" stop-color="#0060ff"/><stop offset="0.52" stop-color="#964aff"/><stop offset="0.717" stop-color="#fe35ff"/><stop offset="0.848" stop-color="#ff17be"/><stop offset="0.959" stop-color="#ff0095"/><stop offset="1" stop-color="#ff0088"/></linearGradient><linearGradient id="g179" gradientUnits="userSpaceOnUse" x1="356" x2="619" y1="0" y2="0"><stop offset="0" stop-color="#0065ff"/><stop offset="0.175" stop-color="#005eff"/><stop offset="0.54" stop-color="#9a46ff"/><stop offset="0.734" stop-color="#fe30ff"/><stop offset="0.856" stop-color="#ff15c3"/><stop offset="0.954" stop-color="#ff009e"/><stop offset="1" stop-color="#ff0090"/></linearGradient><linearGradient id="g180" gradientUnits="userSpaceOnUse" x1="356" x2="614" y1="0" y2="0"><stop offset="0" stop-color="#0063ff"/><stop offset="0.178" stop-color="#005bff"/><stop offset="0.55" stop-color="#9942ff"/><stop offset="0.752" stop-color="#fe2cff"/><stop offset="0.953" stop-color="#ff00a6"/><stop offset="1" stop-color="#ff0097"/></linearGradient><linearGradient id="g181" gradientUnits="userSpaceOnUse" x1="357" x2="610" y1="0" y2="0"><stop offset="0" stop-color="#0061ff"/><stop offset="0.178" stop-color="#0059ff"/><stop offset="0.569" stop-color="#9d3eff"/><stop offset="0.767" stop-color="#fe27ff"/><stop offset="0.949" stop-color="#ff00af"/><stop offset="1" stop-color="#ff009e"/></linearGradient><linearGradient id="g182" gradientUnits="userSpaceOnUse" x1="358" x2="605" y1="0" y2="0"><stop offset="0" stop-color="#005eff"/><stop offset="0.178" stop-color="#0056ff"/><stop offset="0.591" stop-color="#a13aff"/><stop offset="0.785" stop-color="#fe22ff"/><stop offset="0.947" stop-color="#ff00b8"/><stop offset="1" stop-color="#ff00a6"/></linearGradient><linearGradient id="g183" gradientUnits="userSpaceOnUse" x1="359" x2="600" y1="0" y2="0"><stop offset="0" stop-color="#005cff"/><stop offset="0.178" stop-color="#0054ff"/><stop offset="0.602" stop-color="#a037ff"/><stop offset="0.805" stop-color="#ff1eff"/><stop offset="0.942" stop-color="#ff00c3"/><stop offset="1" stop-color="#ff00ae"/></linearGradient><linearGradient id="g184" gradientUnits="userSpaceOnUse" x1="360" x2="596" y1="0" y2="0"><stop offset="0" stop-color="#005aff"/><stop offset="0.178" stop-color="#0052ff"/><stop offset="0.593" stop-color="#9835ff"/><stop offset="0.822" stop-color="#ff19ff"/><stop offset="0.936" stop-color="#ff00cc"/><stop offset="1" stop-color="#ff00b5"/></linearGradient><linearGradient id="g185" gradientUnits="userSpaceOnUse" x1="361" x2="591" y1="0" y2="0"><stop offset="0" stop-color="#0057ff"/><stop offset="0.183" stop-color="#014fff"/><stop offset="0.63" stop-color="#a12fff"/><stop offset="0.843" stop-color="#ff14ff"/><stop offset="0.935" stop-color="#ff00d7"/><stop offset="1" stop-color="#ff00bf"/></linearGradient><linearGradient id="g186" gradientUnits="userSpaceOnUse" x1="362" x2="586" y1="0" y2="0"><stop offset="0" stop-color="#0055ff"/><stop offset="0.183" stop-color="#014dff"/><stop offset="0.603" stop-color="#9130ff"/><stop offset="0.866" stop-color="#ff0fff"/><stop offset="0.929" stop-color="#ff00e3"/><stop offset="1" stop-color="#ff00c8"/></linearGradient><linearGradient id="g187" gradientUnits="userSpaceOnUse" x1="363" x2="581" y1="0" y2="0"><stop offset="0" stop-color="#0053ff"/><stop offset="0.183" stop-color="#014aff"/><stop offset="0.615" stop-color="#902dff"/><stop offset="0.89" stop-color="#ff09ff"/><stop offset="0.927" stop-color="#ff00ef"/><stop offset="1" stop-color="#ff00d2"/></linearGradient><linearGradient id="g188" gradientUnits="userSpaceOnUse" x1="364" x2="577" y1="0" y2="0"><stop offset="0" stop-color="#0050ff"/><stop offset="0.183" stop-color="#0148ff"/><stop offset="0.615" stop-color="#8c2bff"/><stop offset="0.911" stop-color="#ff02ff"/><stop offset="1" stop-color="#ff00da"/></linearGradient><linearGradient id="g189" gradientUnits="userSpaceOnUse" x1="365" x2="572" y1="0" y2="0"><stop offset="0" stop-color="#004eff"/><stop offset="0.184" stop-color="#0146ff"/><stop offset="0.676" stop-color="#9b23ff"/><stop offset="0.937" stop-color="#ff00ff"/><stop offset="1" stop-color="#ff00e5"/></linearGradient><linearGradient id="g190" gradientUnits="userSpaceOnUse" x1="366" x2="567" y1="0" y2="0"><stop offset="0" stop-color="#004cff"/><stop offset="0.184" stop-color="#0043ff"/><stop offset="0.692" stop-color="#9a20ff"/><stop offset="0.91" stop-color="#e900ff"/><stop offset="0.965" stop-color="#ff00ff"/><stop offset="1" stop-color="#ff00f1"/></linearGradient><linearGradient id="g191" gradientUnits="userSpaceOnUse" x1="367" x2="563" y1="0" y2="0"><stop offset="0" stop-color="#004aff"/><stop offset="0.184" stop-color="#0041ff"/><stop offset="0.679" stop-color="#911fff"/><stop offset="0.903" stop-color="#de00ff"/><stop offset="1" stop-color="#ff00fa"/></linearGradient><linearGradient id="g192" gradientUnits="userSpaceOnUse" x1="368" x2="558" y1="0" y2="0"><stop offset="0" stop-color="#0047ff"/><stop offset="0.184" stop-color="#003fff"/><stop offset="0.695" stop-color="#901cff"/><stop offset="0.9" stop-color="#d300ff"/><stop offset="1" stop-color="#f700ff"/></linearGradient><linearGradient id="g193" gradientUnits="userSpaceOnUse" x1="369" x2="553" y1="0" y2="0"><stop offset="0" stop-color="#0045ff"/><stop offset="0.185" stop-color="#003dff"/><stop offset="0.739" stop-color="#9715ff"/><stop offset="0.897" stop-color="#c800ff"/><stop offset="1" stop-color="#ec00ff"/></linearGradient><linearGradient id="g194" gradientUnits="userSpaceOnUse" x1="370" x2="549" y1="0" y2="0"><stop offset="0" stop-color="#0043ff"/><stop offset="0.184" stop-color="#003aff"/><stop offset="0.609" stop-color="#6f20ff"/><stop offset="0.883" stop-color="#bc00ff"/><stop offset="1" stop-color="#e200ff"/></linearGradient><linearGradient id="g195" gradientUnits="userSpaceOnUse" x1="371" x2="544" y1="0" y2="0"><stop offset="0" stop-color="#0040ff"/><stop offset="0.185" stop-color="#0038ff"/><stop offset="0.613" stop-color="#6c1eff"/><stop offset="0.879" stop-color="#b300ff"/><stop offset="1" stop-color="#d700ff"/></linearGradient><linearGradient id="g196" gradientUnits="userSpaceOnUse" x1="372" x2="539" y1="0" y2="0"><stop offset="0" stop-color="#003eff"/><stop offset="0.186" stop-color="#0036ff"/><stop offset="0.617" stop-color="#681cff"/><stop offset="0.874" stop-color="#a900ff"/><stop offset="1" stop-color="#cd00ff"/></linearGradient><linearGradient id="g197" gradientUnits="userSpaceOnUse" x1="373" x2="535" y1="0" y2="0"><stop offset="0" stop-color="#003cff"/><stop offset="0.185" stop-color="#0033ff"/><stop offset="0.617" stop-color="#651aff"/><stop offset="0.858" stop-color="#9e00ff"/><stop offset="1" stop-color="#c400ff"/></linearGradient><linearGradient id="g198" gradientUnits="userSpaceOnUse" x1="375" x2="530" y1="0" y2="0"><stop offset="0" stop-color="#0039ff"/><stop offset="0.187" stop-color="#0131ff"/><stop offset="0.619" stop-color="#6118ff"/><stop offset="0.852" stop-color="#9600ff"/><stop offset="1" stop-color="#bb00ff"/></linearGradient><linearGradient id="g199" gradientUnits="userSpaceOnUse" x1="376" x2="525" y1="0" y2="0"><stop offset="0" stop-color="#0037ff"/><stop offset="0.188" stop-color="#012fff"/><stop offset="0.611" stop-color="#5b17ff"/><stop offset="0.846" stop-color="#8d00ff"/><stop offset="1" stop-color="#b100ff"/></linearGradient><linearGradient id="g200" gradientUnits="userSpaceOnUse" x1="377" x2="521" y1="0" y2="0"><stop offset="0" stop-color="#0034ff"/><stop offset="0.188" stop-color="#012cff"/><stop offset="0.833" stop-color="#8500ff"/><stop offset="1" stop-color="#a900ff"/></linearGradient><linearGradient id="g201" gradientUnits="userSpaceOnUse" x1="378" x2="516" y1="0" y2="0"><stop offset="0" stop-color="#0032ff"/><stop offset="0.188" stop-color="#012aff"/><stop offset="0.819" stop-color="#7b00ff"/><stop offset="1" stop-color="#a100ff"/></linearGradient><linearGradient id="g202" gradientUnits="userSpaceOnUse" x1="379" x2="511" y1="0" y2="0"><stop offset="0" stop-color="#002fff"/><stop offset="0.189" stop-color="#0128ff"/><stop offset="0.811" stop-color="#7400ff"/><stop offset="1" stop-color="#9800ff"/></linearGradient><linearGradient id="g203" gradientUnits="userSpaceOnUse" x1="381" x2="506" y1="0" y2="0"><stop offset="0" stop-color="#002dff"/><stop offset="0.184" stop-color="#0025ff"/><stop offset="0.8" stop-color="#6c00ff"/><stop offset="1" stop-color="#8f00ff"/></linearGradient><linearGradient id="g204" gradientUnits="userSpaceOnUse" x1="382" x2="502" y1="0" y2="0"><stop offset="0" stop-color="#002aff"/><stop offset="0.183" stop-color="#0023ff"/><stop offset="0.775" stop-color="#6300ff"/><stop offset="1" stop-color="#8900ff"/></linearGradient><linearGradient id="g205" gradientUnits="userSpaceOnUse" x1="383" x2="497" y1="0" y2="0"><stop offset="0" stop-color="#0028ff"/><stop offset="0.184" stop-color="#0021ff"/><stop offset="0.763" stop-color="#5c00ff"/><stop offset="1" stop-color="#8100ff"/></linearGradient><linearGradient id="g206" gradientUnits="userSpaceOnUse" x1="385" x2="492" y1="0" y2="0"><stop offset="0" stop-color="#0025ff"/><stop offset="0.178" stop-color="#001fff"/><stop offset="0.748" stop-color="#5500ff"/><stop offset="1" stop-color="#7900ff"/></linearGradient><linearGradient id="g207" gradientUnits="userSpaceOnUse" x1="386" x2="488" y1="0" y2="0"><stop offset="0" stop-color="#0023ff"/><stop offset="0.176" stop-color="#001cff"/><stop offset="0.725" stop-color="#4e00ff"/><stop offset="1" stop-color="#7300ff"/></linearGradient><linearGradient id="g208" gradientUnits="userSpaceOnUse" x1="387" x2="483" y1="0" y2="0"><stop offset="0" stop-color="#0020ff"/><stop offset="0.177" stop-color="#001aff"/><stop offset="0.698" stop-color="#4600ff"/><stop offset="1" stop-color="#6b00ff"/></linearGradient><linearGradient id="g209" gradientUnits="userSpaceOnUse" x1="389" x2="478" y1="0" y2="0"><stop offset="0" stop-color="#001dff"/><stop offset="0.169" stop-color="#0018ff"/><stop offset="0.674" stop-color="#3f00ff"/><stop offset="1" stop-color="#6400ff"/></linearGradient><linearGradient id="g210" gradientUnits="userSpaceOnUse" x1="390" x2="474" y1="0" y2="0"><stop offset="0" stop-color="#001bff"/><stop offset="0.167" stop-color="#0015ff"/><stop offset="0.643" stop-color="#3800ff"/><stop offset="1" stop-color="#5e00ff"/></linearGradient><linearGradient id="g211" gradientUnits="userSpaceOnUse" x1="392" x2="469" y1="0" y2="0"><stop offset="0" stop-color="#0018ff"/><stop offset="0.169" stop-color="#0112ff"/><stop offset="0.597" stop-color="#3000ff"/><stop offset="1" stop-color="#5700ff"/></linearGradient><linearGradient id="g212" gradientUnits="userSpaceOnUse" x1="393" x2="464" y1="0" y2="0"><stop offset="0" stop-color="#0015ff"/><stop offset="0.169" stop-color="#0110ff"/><stop offset="0.563" stop-color="#2900ff"/><stop offset="1" stop-color="#5000ff"/></linearGradient><linearGradient id="g213" gradientUnits="userSpaceOnUse" x1="394" x2="460" y1="0" y2="0"><stop offset="0" stop-color="#0012ff"/><stop offset="0.167" stop-color="#010dff"/><stop offset="0.515" stop-color="#2300ff"/><stop offset="1" stop-color="#4b00ff"/></linearGradient><linearGradient id="g214" gradientUnits="userSpaceOnUse" x1="396" x2="455" y1="0" y2="0"><stop offset="0" stop-color="#000fff"/><stop offset="0.153" stop-color="#010bff"/><stop offset="0.458" stop-color="#1c00ff"/><stop offset="1" stop-color="#4400ff"/></linearGradient><linearGradient id="g215" gradientUnits="userSpaceOnUse" x1="398" x2="450" y1="0" y2="0"><stop offset="0" stop-color="#000bff"/><stop offset="0.135" stop-color="#0108ff"/><stop offset="1" stop-color="#3e00ff"/></linearGradient><linearGradient id="g216" gradientUnits="userSpaceOnUse" x1="399" x2="446" y1="0" y2="0"><stop offset="0" stop-color="#0008ff"/><stop offset="0.128" stop-color="#0005ff"/><stop offset="1" stop-color="#3800ff"/></linearGradient><linearGradient id="g217" gradientUnits="userSpaceOnUse" x1="401" x2="441" y1="0" y2="0"><stop offset="0" stop-color="#0004ff"/><stop offset="1" stop-color="#3200ff"/></linearGradient><linearGradient id="g218" gradientUnits="userSpaceOnUse" x1="403" x2="436" y1="0" y2="0"><stop offset="0" stop-color="#0000ff"/><stop offset="1" stop-color="#2c00ff"/></linearGradient><linearGradient id="g219" gradientUnits="userSpaceOnUse" x1="405" x2="431" y1="0" y2="0"><stop offset="0" stop-color="#0000ff"/><stop offset="1" stop-color="#2500ff"/></linearGradient><linearGradient id="g220" gradientUnits="userSpaceOnUse" x1="407" x2="427" y1="0" y2="0"><stop offset="0" stop-color="#0400ff"/><stop offset="1" stop-color="#2000ff"/></linearGradient><linearGradient id="g221" gradientUnits="userSpaceOnUse" x1="409" x2="422" y1="0" y2="0"><stop offset="0" stop-color="#0700ff"/><stop offset="1" stop-color="#1900ff"/></linearGradient><linearGradient id="g222" gradientUnits="userSpaceOnUse" x1="410" x2="417" y1="0" y2="0"><stop offset="0" stop-color="#0900ff"/><stop offset="1" stop-color="#1300ff"/></linearGradient></defs><g clip-path="url(#hs)"><rect x="348" y="95" width="21" height="2.5" fill="url(#g0)"/><rect x="343" y="97" width="33" height="2.5" fill="url(#g1)"/><rect x="339" y="99" width="43" height="2.5" fill="url(#g2)"/><rect x="337" y="101" width="50" height="2.5" fill="url(#g3)"/><rect x="335" y="103" width="57" height="2.5" fill="url(#g4)"/><rect x="333" y="105" width="63" height="2.5" fill="url(#g5)"/><rect x="332" y="107" width="68" height="2.5" fill="url(#g6)"/><rect x="330" y="109" width="75" height="2.5" fill="url(#g7)"/><rect x="329" y="111" width="80" height="2.5" fill="url(#g8)"/><rect x="327" y="113" width="86" height="2.5" fill="url(#g9)"/><rect x="326" y="115" width="90" height="2.5" fill="url(#g10)"/><rect x="325" y="117" width="95" height="2.5" fill="url(#g11)"/><rect x="324" y="119" width="99" height="2.5" fill="url(#g12)"/><rect x="323" y="121" width="104" height="2.5" fill="url(#g13)"/><rect x="322" y="123" width="108" height="2.5" fill="url(#g14)"/><rect x="322" y="125" width="111" height="2.5" fill="url(#g15)"/><rect x="321" y="127" width="115" height="2.5" fill="url(#g16)"/><rect x="320" y="129" width="119" height="2.5" fill="url(#g17)"/><rect x="319" y="131" width="123" height="2.5" fill="url(#g18)"/><rect x="319" y="133" width="126" height="2.5" fill="url(#g19)"/><rect x="318" y="135" width="130" height="2.5" fill="url(#g20)"/><rect x="318" y="137" width="132" height="2.5" fill="url(#g21)"/><rect x="317" y="139" width="136" height="2.5" fill="url(#g22)"/><rect x="317" y="141" width="139" height="2.5" fill="url(#g23)"/><rect x="316" y="143" width="142" height="2.5" fill="url(#g24)"/><rect x="316" y="145" width="145" height="2.5" fill="url(#g25)"/><rect x="315" y="147" width="149" height="2.5" fill="url(#g26)"/><rect x="315" y="149" width="151" height="2.5" fill="url(#g27)"/><rect x="314" y="151" width="155" height="2.5" fill="url(#g28)"/><rect x="314" y="153" width="157" height="2.5" fill="url(#g29)"/><rect x="314" y="155" width="160" height="2.5" fill="url(#g30)"/><rect x="313" y="157" width="163" height="2.5" fill="url(#g31)"/><rect x="313" y="159" width="166" height="2.5" fill="url(#g32)"/><rect x="313" y="161" width="168" height="2.5" fill="url(#g33)"/><rect x="313" y="163" width="171" height="2.5" fill="url(#g34)"/><rect x="312" y="165" width="174" height="2.5" fill="url(#g35)"/><rect x="312" y="167" width="177" height="2.5" fill="url(#g36)"/><rect x="312" y="169" width="179" height="2.5" fill="url(#g37)"/><rect x="312" y="171" width="181" height="2.5" fill="url(#g38)"/><rect x="312" y="173" width="184" height="2.5" fill="url(#g39)"/><rect x="312" y="175" width="186" height="2.5" fill="url(#g40)"/><rect x="312" y="177" width="188" height="2.5" fill="url(#g41)"/><rect x="311" y="179" width="191" height="2.5" fill="url(#g42)"/><rect x="311" y="181" width="194" height="2.5" fill="url(#g43)"/><rect x="311" y="183" width="196" height="2.5" fill="url(#g44)"/><rect x="311" y="185" width="198" height="2.5" fill="url(#g45)"/><rect x="311" y="187" width="201" height="2.5" fill="url(#g46)"/><rect x="311" y="189" width="203" height="2.5" fill="url(#g47)"/><rect x="311" y="191" width="205" height="2.5" fill="url(#g48)"/><rect x="311" y="193" width="207" height="2.5" fill="url(#g49)"/><rect x="311" y="195" width="209" height="2.5" fill="url(#g50)"/><rect x="311" y="197" width="212" height="2.5" fill="url(#g51)"/><rect x="311" y="199" width="214" height="2.5" fill="url(#g52)"/><rect x="311" y="201" width="216" height="2.5" fill="url(#g53)"/><rect x="311" y="203" width="218" height="2.5" fill="url(#g54)"/><rect x="311" y="205" width="221" height="2.5" fill="url(#g55)"/><rect x="312" y="207" width="222" height="2.5" fill="url(#g56)"/><rect x="312" y="209" width="224" height="2.5" fill="url(#g57)"/><rect x="312" y="211" width="226" height="2.5" fill="url(#g58)"/><rect x="312" y="213" width="228" height="2.5" fill="url(#g59)"/><rect x="312" y="215" width="231" height="2.5" fill="url(#g60)"/><rect x="312" y="217" width="233" height="2.5" fill="url(#g61)"/><rect x="312" y="219" width="235" height="2.5" fill="url(#g62)"/><rect x="312" y="221" width="237" height="2.5" fill="url(#g63)"/><rect x="312" y="223" width="239" height="2.5" fill="url(#g64)"/><rect x="312" y="225" width="241" height="2.5" fill="url(#g65)"/><rect x="312" y="227" width="244" height="2.5" fill="url(#g66)"/><rect x="312" y="229" width="246" height="2.5" fill="url(#g67)"/><rect x="312" y="231" width="248" height="2.5" fill="url(#g68)"/><rect x="313" y="233" width="249" height="2.5" fill="url(#g69)"/><rect x="313" y="235" width="251" height="2.5" fill="url(#g70)"/><rect x="313" y="237" width="253" height="2.5" fill="url(#g71)"/><rect x="313" y="239" width="256" height="2.5" fill="url(#g72)"/><rect x="313" y="241" width="258" height="2.5" fill="url(#g73)"/><rect x="313" y="243" width="260" height="2.5" fill="url(#g74)"/><rect x="313" y="245" width="262" height="2.5" fill="url(#g75)"/><rect x="313" y="247" width="264" height="2.5" fill="url(#g76)"/><rect x="314" y="249" width="265" height="2.5" fill="url(#g77)"/><rect x="314" y="251" width="268" height="2.5" fill="url(#g78)"/><rect x="314" y="253" width="270" height="2.5" fill="url(#g79)"/><rect x="314" y="255" width="272" height="2.5" fill="url(#g80)"/><rect x="314" y="257" width="274" height="2.5" fill="url(#g81)"/><rect x="314" y="259" width="276" height="2.5" fill="url(#g82)"/><rect x="315" y="261" width="277" height="2.5" fill="url(#g83)"/><rect x="315" y="263" width="279" height="2.5" fill="url(#g84)"/><rect x="315" y="265" width="281" height="2.5" fill="url(#g85)"/><rect x="315" y="267" width="284" height="2.5" fill="url(#g86)"/><rect x="315" y="269" width="286" height="2.5" fill="url(#g87)"/><rect x="316" y="271" width="287" height="2.5" fill="url(#g88)"/><rect x="316" y="273" width="289" height="2.5" fill="url(#g89)"/><rect x="316" y="275" width="291" height="2.5" fill="url(#g90)"/><rect x="316" y="277" width="293" height="2.5" fill="url(#g91)"/><rect x="316" y="279" width="296" height="2.5" fill="url(#g92)"/><rect x="317" y="281" width="297" height="2.5" fill="url(#g93)"/><rect x="317" y="283" width="299" height="2.5" fill="url(#g94)"/><rect x="317" y="285" width="301" height="2.5" fill="url(#g95)"/><rect x="317" y="287" width="303" height="2.5" fill="url(#g96)"/><rect x="318" y="289" width="304" height="2.5" fill="url(#g97)"/><rect x="318" y="291" width="307" height="2.5" fill="url(#g98)"/><rect x="318" y="293" width="309" height="2.5" fill="url(#g99)"/><rect x="319" y="295" width="310" height="2.5" fill="url(#g100)"/><rect x="319" y="297" width="312" height="2.5" fill="url(#g101)"/><rect x="319" y="299" width="315" height="2.5" fill="url(#g102)"/><rect x="319" y="301" width="317" height="2.5" fill="url(#g103)"/><rect x="320" y="303" width="318" height="2.5" fill="url(#g104)"/><rect x="320" y="305" width="320" height="2.5" fill="url(#g105)"/><rect x="320" y="307" width="323" height="2.5" fill="url(#g106)"/><rect x="321" y="309" width="324" height="2.5" fill="url(#g107)"/><rect x="321" y="311" width="326" height="2.5" fill="url(#g108)"/><rect x="321" y="313" width="329" height="2.5" fill="url(#g109)"/><rect x="321" y="315" width="331" height="2.5" fill="url(#g110)"/><rect x="322" y="317" width="333" height="2.5" fill="url(#g111)"/><rect x="322" y="319" width="335" height="2.5" fill="url(#g112)"/><rect x="323" y="321" width="337" height="2.5" fill="url(#g113)"/><rect x="323" y="323" width="339" height="2.5" fill="url(#g114)"/><rect x="323" y="325" width="342" height="2.5" fill="url(#g115)"/><rect x="324" y="327" width="343" height="2.5" fill="url(#g116)"/><rect x="324" y="329" width="346" height="2.5" fill="url(#g117)"/><rect x="324" y="331" width="348" height="2.5" fill="url(#g118)"/><rect x="325" y="333" width="350" height="2.5" fill="url(#g119)"/><rect x="325" y="335" width="352" height="2.5" fill="url(#g120)"/><rect x="325" y="337" width="354" height="2.5" fill="url(#g121)"/><rect x="326" y="339" width="356" height="2.5" fill="url(#g122)"/><rect x="326" y="341" width="358" height="2.5" fill="url(#g123)"/><rect x="326" y="343" width="360" height="2.5" fill="url(#g124)"/><rect x="327" y="345" width="362" height="2.5" fill="url(#g125)"/><rect x="327" y="347" width="364" height="2.5" fill="url(#g126)"/><rect x="327" y="349" width="366" height="2.5" fill="url(#g127)"/><rect x="328" y="351" width="368" height="2.5" fill="url(#g128)"/><rect x="328" y="353" width="370" height="2.5" fill="url(#g129)"/><rect x="328" y="355" width="372" height="2.5" fill="url(#g130)"/><rect x="329" y="357" width="373" height="2.5" fill="url(#g131)"/><rect x="329" y="359" width="376" height="2.5" fill="url(#g132)"/><rect x="330" y="361" width="377" height="2.5" fill="url(#g133)"/><rect x="330" y="363" width="379" height="2.5" fill="url(#g134)"/><rect x="330" y="365" width="381" height="2.5" fill="url(#g135)"/><rect x="331" y="367" width="383" height="2.5" fill="url(#g136)"/><rect x="331" y="369" width="385" height="2.5" fill="url(#g137)"/><rect x="332" y="371" width="386" height="2.5" fill="url(#g138)"/><rect x="332" y="373" width="388" height="2.5" fill="url(#g139)"/><rect x="333" y="375" width="389" height="2.5" fill="url(#g140)"/><rect x="333" y="377" width="391" height="2.5" fill="url(#g141)"/><rect x="334" y="379" width="393" height="2.5" fill="url(#g142)"/><rect x="334" y="381" width="395" height="2.5" fill="url(#g143)"/><rect x="335" y="383" width="395" height="2.5" fill="url(#g144)"/><rect x="335" y="385" width="397" height="2.5" fill="url(#g145)"/><rect x="336" y="387" width="398" height="2.5" fill="url(#g146)"/><rect x="336" y="389" width="400" height="2.5" fill="url(#g147)"/><rect x="337" y="391" width="401" height="2.5" fill="url(#g148)"/><rect x="337" y="393" width="403" height="2.5" fill="url(#g149)"/><rect x="338" y="395" width="404" height="2.5" fill="url(#g150)"/><rect x="338" y="397" width="406" height="2.5" fill="url(#g151)"/><rect x="339" y="399" width="405" height="2.5" fill="url(#g152)"/><rect x="339" y="401" width="402" height="2.5" fill="url(#g153)"/><rect x="340" y="403" width="396" height="2.5" fill="url(#g154)"/><rect x="340" y="405" width="391" height="2.5" fill="url(#g155)"/><rect x="341" y="407" width="386" height="2.5" fill="url(#g156)"/><rect x="341" y="409" width="381" height="2.5" fill="url(#g157)"/><rect x="342" y="411" width="375" height="2.5" fill="url(#g158)"/><rect x="342" y="413" width="371" height="2.5" fill="url(#g159)"/><rect x="343" y="415" width="365" height="2.5" fill="url(#g160)"/><rect x="343" y="417" width="360" height="2.5" fill="url(#g161)"/><rect x="344" y="419" width="355" height="2.5" fill="url(#g162)"/><rect x="344" y="421" width="350" height="2.5" fill="url(#g163)"/><rect x="345" y="423" width="344" height="2.5" fill="url(#g164)"/><rect x="346" y="425" width="339" height="2.5" fill="url(#g165)"/><rect x="346" y="427" width="334" height="2.5" fill="url(#g166)"/><rect x="347" y="429" width="328" height="2.5" fill="url(#g167)"/><rect x="348" y="431" width="323" height="2.5" fill="url(#g168)"/><rect x="348" y="433" width="318" height="2.5" fill="url(#g169)"/><rect x="349" y="435" width="312" height="2.5" fill="url(#g170)"/><rect x="350" y="437" width="306" height="2.5" fill="url(#g171)"/><rect x="350" y="439" width="302" height="2.5" fill="url(#g172)"/><rect x="351" y="441" width="296" height="2.5" fill="url(#g173)"/><rect x="352" y="443" width="290" height="2.5" fill="url(#g174)"/><rect x="353" y="445" width="285" height="2.5" fill="url(#g175)"/><rect x="353" y="447" width="280" height="2.5" fill="url(#g176)"/><rect x="354" y="449" width="274" height="2.5" fill="url(#g177)"/><rect x="355" y="451" width="269" height="2.5" fill="url(#g178)"/><rect x="356" y="453" width="263" height="2.5" fill="url(#g179)"/><rect x="356" y="455" width="258" height="2.5" fill="url(#g180)"/><rect x="357" y="457" width="253" height="2.5" fill="url(#g181)"/><rect x="358" y="459" width="247" height="2.5" fill="url(#g182)"/><rect x="359" y="461" width="241" height="2.5" fill="url(#g183)"/><rect x="360" y="463" width="236" height="2.5" fill="url(#g184)"/><rect x="361" y="465" width="230" height="2.5" fill="url(#g185)"/><rect x="362" y="467" width="224" height="2.5" fill="url(#g186)"/><rect x="363" y="469" width="218" height="2.5" fill="url(#g187)"/><rect x="364" y="471" width="213" height="2.5" fill="url(#g188)"/><rect x="365" y="473" width="207" height="2.5" fill="url(#g189)"/><rect x="366" y="475" width="201" height="2.5" fill="url(#g190)"/><rect x="367" y="477" width="196" height="2.5" fill="url(#g191)"/><rect x="368" y="479" width="190" height="2.5" fill="url(#g192)"/><rect x="369" y="481" width="184" height="2.5" fill="url(#g193)"/><rect x="370" y="483" width="179" height="2.5" fill="url(#g194)"/><rect x="371" y="485" width="173" height="2.5" fill="url(#g195)"/><rect x="372" y="487" width="167" height="2.5" fill="url(#g196)"/><rect x="373" y="489" width="162" height="2.5" fill="url(#g197)"/><rect x="375" y="491" width="155" height="2.5" fill="url(#g198)"/><rect x="376" y="493" width="149" height="2.5" fill="url(#g199)"/><rect x="377" y="495" width="144" height="2.5" fill="url(#g200)"/><rect x="378" y="497" width="138" height="2.5" fill="url(#g201)"/><rect x="379" y="499" width="132" height="2.5" fill="url(#g202)"/><rect x="381" y="501" width="125" height="2.5" fill="url(#g203)"/><rect x="382" y="503" width="120" height="2.5" fill="url(#g204)"/><rect x="383" y="505" width="114" height="2.5" fill="url(#g205)"/><rect x="385" y="507" width="107" height="2.5" fill="url(#g206)"/><rect x="386" y="509" width="102" height="2.5" fill="url(#g207)"/><rect x="387" y="511" width="96" height="2.5" fill="url(#g208)"/><rect x="389" y="513" width="89" height="2.5" fill="url(#g209)"/><rect x="390" y="515" width="84" height="2.5" fill="url(#g210)"/><rect x="392" y="517" width="77" height="2.5" fill="url(#g211)"/><rect x="393" y="519" width="71" height="2.5" fill="url(#g212)"/><rect x="394" y="521" width="66" height="2.5" fill="url(#g213)"/><rect x="396" y="523" width="59" height="2.5" fill="url(#g214)"/><rect x="398" y="525" width="52" height="2.5" fill="url(#g215)"/><rect x="399" y="527" width="47" height="2.5" fill="url(#g216)"/><rect x="401" y="529" width="40" height="2.5" fill="url(#g217)"/><rect x="403" y="531" width="33" height="2.5" fill="url(#g218)"/><rect x="405" y="533" width="26" height="2.5" fill="url(#g219)"/><rect x="407" y="535" width="20" height="2.5" fill="url(#g220)"/><rect x="409" y="537" width="13" height="2.5" fill="url(#g221)"/><rect x="410" y="539" width="7" height="2.5" fill="url(#g222)"/></g><g fill="#fff" stroke="#000" stroke-width="1.3"><circle cx="389.8" cy="516.1" r="4.4"/><circle cx="412.6" cy="125.6" r="4.4"/><circle cx="398.9" cy="360.8" r="4.4"/><circle cx="392.3" cy="472.7" r="4.4"/><circle cx="390.8" cy="498.5" r="4.4"/><circle cx="390.3" cy="507.0" r="4.4"/><circle cx="390.1" cy="510.7" r="4.4"/><circle cx="390.0" cy="512.6" r="4.4"/><circle cx="389.9" cy="513.7" r="4.4"/><circle cx="389.9" cy="514.3" r="4.4"/><circle cx="407.5" cy="212.7" r="4.4"/><circle cx="394.3" cy="438.1" r="4.4"/><circle cx="391.3" cy="489.4" r="4.4"/><circle cx="390.5" cy="503.7" r="4.4"/><circle cx="410.4" cy="163.8" r="4.4"/><circle cx="404.3" cy="267.8" r="4.4"/><circle cx="395.4" cy="419.0" r="4.4"/><circle cx="393.5" cy="452.7" r="4.4"/><circle cx="391.6" cy="485.0" r="4.4"/><circle cx="391.1" cy="493.0" r="4.4"/><circle cx="411.4" cy="145.7" r="4.4"/><circle cx="402.8" cy="294.2" r="4.4"/><circle cx="396.1" cy="407.3" r="4.4"/><circle cx="393.1" cy="458.7" r="4.4"/><circle cx="411.9" cy="137.6" r="4.4"/><circle cx="409.3" cy="181.7" r="4.4"/><circle cx="405.6" cy="245.8" r="4.4"/><circle cx="401.9" cy="309.1" r="4.4"/><circle cx="396.6" cy="399.4" r="4.4"/><circle cx="395.0" cy="427.3" r="4.4"/><circle cx="393.8" cy="447.4" r="4.4"/><circle cx="412.2" cy="133.4" r="4.4"/><circle cx="401.3" cy="318.7" r="4.4"/><circle cx="396.9" cy="393.8" r="4.4"/><circle cx="412.3" cy="131.0" r="4.4"/><circle cx="411.0" cy="152.8" r="4.4"/><circle cx="408.8" cy="190.2" r="4.4"/><circle cx="406.1" cy="236.3" r="4.4"/><circle cx="403.4" cy="283.0" r="4.4"/><circle cx="400.9" cy="325.3" r="4.4"/><circle cx="397.2" cy="389.6" r="4.4"/><circle cx="412.4" cy="129.5" r="4.4"/><circle cx="409.7" cy="174.7" r="4.4"/><circle cx="405.1" cy="254.1" r="4.4"/><circle cx="400.6" cy="330.1" r="4.4"/><circle cx="727.9" cy="388.2" r="4.4"/><circle cx="528.7" cy="463.5" r="4.4"/><circle cx="429.3" cy="501.1" r="4.4"/><circle cx="405.9" cy="510.0" r="4.4"/><circle cx="398.0" cy="513.0" r="4.4"/><circle cx="394.7" cy="514.2" r="4.4"/><circle cx="392.9" cy="514.9" r="4.4"/><circle cx="392.0" cy="515.2" r="4.4"/><circle cx="391.4" cy="515.5" r="4.4"/><circle cx="574.7" cy="260.5" r="4.4"/><circle cx="398.4" cy="504.2" r="4.4"/><circle cx="394.9" cy="509.0" r="4.4"/><circle cx="393.1" cy="511.5" r="4.4"/><circle cx="392.1" cy="512.9" r="4.4"/><circle cx="391.5" cy="513.7" r="4.4"/><circle cx="465.2" cy="169.4" r="4.4"/><circle cx="450.7" cy="236.3" r="4.4"/><circle cx="423.1" cy="362.8" r="4.4"/><circle cx="407.2" cy="436.2" r="4.4"/><circle cx="399.6" cy="470.8" r="4.4"/><circle cx="395.9" cy="488.1" r="4.4"/><circle cx="393.8" cy="497.5" r="4.4"/><circle cx="392.6" cy="503.0" r="4.4"/><circle cx="391.9" cy="506.5" r="4.4"/><circle cx="434.8" cy="144.0" r="4.4"/><circle cx="430.7" cy="178.1" r="4.4"/><circle cx="419.2" cy="273.3" r="4.4"/><circle cx="408.5" cy="361.6" r="4.4"/><circle cx="401.6" cy="418.4" r="4.4"/><circle cx="397.5" cy="451.9" r="4.4"/><circle cx="395.1" cy="472.0" r="4.4"/><circle cx="393.6" cy="484.5" r="4.4"/><circle cx="392.6" cy="492.6" r="4.4"/><circle cx="424.2" cy="135.2" r="4.4"/><circle cx="422.4" cy="154.1" r="4.4"/><circle cx="416.7" cy="217.7" r="4.4"/><circle cx="409.6" cy="296.2" r="4.4"/><circle cx="403.7" cy="361.2" r="4.4"/><circle cx="399.6" cy="407.1" r="4.4"/><circle cx="396.8" cy="437.8" r="4.4"/><circle cx="395.0" cy="458.3" r="4.4"/><circle cx="393.7" cy="472.3" r="4.4"/><circle cx="419.5" cy="131.3" r="4.4"/><circle cx="418.6" cy="142.9" r="4.4"/><circle cx="415.3" cy="185.6" r="4.4"/><circle cx="410.5" cy="247.9" r="4.4"/><circle cx="405.7" cy="310.1" r="4.4"/><circle cx="401.7" cy="361.1" r="4.4"/><circle cx="398.8" cy="399.3" r="4.4"/><circle cx="396.6" cy="427.1" r="4.4"/><circle cx="395.1" cy="447.1" r="4.4"/><circle cx="417.1" cy="129.3" r="4.4"/><circle cx="416.5" cy="137.0" r="4.4"/><circle cx="414.4" cy="166.7" r="4.4"/><circle cx="411.1" cy="214.6" r="4.4"/><circle cx="407.2" cy="268.9" r="4.4"/><circle cx="403.7" cy="319.2" r="4.4"/><circle cx="400.7" cy="361.0" r="4.4"/><circle cx="398.4" cy="393.8" r="4.4"/><circle cx="396.6" cy="418.9" r="4.4"/><circle cx="415.7" cy="128.1" r="4.4"/><circle cx="415.4" cy="133.5" r="4.4"/><circle cx="413.9" cy="154.9" r="4.4"/><circle cx="411.5" cy="191.8" r="4.4"/><circle cx="408.4" cy="237.3" r="4.4"/><circle cx="405.3" cy="283.7" r="4.4"/><circle cx="402.5" cy="325.6" r="4.4"/><circle cx="400.1" cy="360.9" r="4.4"/><circle cx="398.2" cy="389.6" r="4.4"/><circle cx="414.9" cy="127.4" r="4.4"/><circle cx="414.6" cy="131.4" r="4.4"/><circle cx="413.6" cy="147.4" r="4.4"/><circle cx="411.7" cy="176.0" r="4.4"/><circle cx="409.3" cy="213.6" r="4.4"/><circle cx="406.6" cy="254.7" r="4.4"/><circle cx="404.1" cy="294.5" r="4.4"/><circle cx="401.8" cy="330.3" r="4.4"/><circle cx="399.8" cy="360.9" r="4.4"/><circle cx="655.7" cy="415.5" r="4.4"/><circle cx="460.3" cy="489.4" r="4.4"/><circle cx="414.1" cy="506.9" r="4.4"/><circle cx="401.0" cy="511.8" r="4.4"/><circle cx="680.0" cy="348.3" r="4.4"/><circle cx="405.9" cy="506.7" r="4.4"/><circle cx="401.1" cy="509.5" r="4.4"/><circle cx="398.1" cy="511.3" r="4.4"/><circle cx="502.6" cy="200.5" r="4.4"/><circle cx="413.8" cy="448.8" r="4.4"/><circle cx="406.6" cy="469.1" r="4.4"/><circle cx="401.9" cy="482.1" r="4.4"/><circle cx="398.9" cy="490.6" r="4.4"/><circle cx="462.0" cy="184.4" r="4.4"/><circle cx="436.0" cy="303.8" r="4.4"/><circle cx="413.7" cy="406.3" r="4.4"/><circle cx="402.7" cy="456.7" r="4.4"/><circle cx="445.7" cy="153.1" r="4.4"/><circle cx="444.2" cy="163.2" r="4.4"/><circle cx="438.4" cy="200.6" r="4.4"/><circle cx="429.8" cy="256.5" r="4.4"/><circle cx="421.0" cy="313.8" r="4.4"/><circle cx="413.5" cy="362.0" r="4.4"/><circle cx="407.8" cy="399.0" r="4.4"/><circle cx="403.6" cy="426.3" r="4.4"/><circle cx="400.5" cy="446.2" r="4.4"/><circle cx="434.0" cy="151.0" r="4.4"/><circle cx="425.3" cy="222.4" r="4.4"/><circle cx="413.4" cy="321.2" r="4.4"/><circle cx="404.6" cy="393.7" r="4.4"/><circle cx="428.3" cy="138.6" r="4.4"/><circle cx="427.8" cy="143.6" r="4.4"/><circle cx="425.7" cy="163.7" r="4.4"/><circle cx="422.2" cy="198.5" r="4.4"/><circle cx="417.8" cy="241.7" r="4.4"/><circle cx="413.2" cy="286.2" r="4.4"/><circle cx="409.1" cy="326.9" r="4.4"/><circle cx="405.6" cy="361.4" r="4.4"/><circle cx="402.7" cy="389.6" r="4.4"/><circle cx="423.8" cy="138.9" r="4.4"/><circle cx="420.0" cy="181.6" r="4.4"/><circle cx="413.1" cy="257.4" r="4.4"/><circle cx="406.5" cy="331.1" r="4.4"/><circle cx="696.4" cy="400.1" r="4.4"/><circle cx="609.1" cy="433.1" r="4.4"/><circle cx="477.4" cy="482.9" r="4.4"/><circle cx="447.2" cy="494.3" r="4.4"/><circle cx="418.1" cy="505.4" r="4.4"/><circle cx="410.8" cy="508.1" r="4.4"/><circle cx="707.9" cy="371.5" r="4.4"/><circle cx="680.0" cy="384.2" r="4.4"/><circle cx="600.8" cy="420.2" r="4.4"/><circle cx="525.6" cy="454.4" r="4.4"/><circle cx="476.3" cy="476.8" r="4.4"/><circle cx="446.8" cy="490.1" r="4.4"/><circle cx="429.1" cy="498.2" r="4.4"/><circle cx="418.0" cy="503.2" r="4.4"/><circle cx="410.8" cy="506.5" r="4.4"/><circle cx="644.9" cy="319.0" r="4.4"/><circle cx="521.9" cy="216.6" r="4.4"/><circle cx="487.3" cy="187.8" r="4.4"/><circle cx="447.9" cy="320.3" r="4.4"/><circle cx="435.0" cy="363.8" r="4.4"/><circle cx="424.7" cy="398.5" r="4.4"/><circle cx="416.9" cy="424.7" r="4.4"/><circle cx="411.1" cy="444.3" r="4.4"/><circle cx="464.0" cy="175.2" r="4.4"/><circle cx="459.0" cy="198.1" r="4.4"/><circle cx="440.9" cy="281.4" r="4.4"/><circle cx="431.4" cy="325.1" r="4.4"/><circle cx="416.5" cy="393.5" r="4.4"/><circle cx="411.2" cy="417.5" r="4.4"/><circle cx="451.0" cy="157.5" r="4.4"/><circle cx="450.2" cy="161.9" r="4.4"/><circle cx="447.2" cy="179.6" r="4.4"/><circle cx="441.9" cy="210.7" r="4.4"/><circle cx="435.2" cy="250.0" r="4.4"/><circle cx="428.2" cy="291.1" r="4.4"/><circle cx="421.6" cy="329.3" r="4.4"/><circle cx="416.0" cy="362.3" r="4.4"/><circle cx="411.4" cy="389.6" r="4.4"/><circle cx="441.4" cy="149.5" r="4.4"/><circle cx="440.9" cy="152.9" r="4.4"/><circle cx="439.0" cy="166.8" r="4.4"/><circle cx="435.4" cy="191.9" r="4.4"/><circle cx="430.7" cy="225.4" r="4.4"/><circle cx="425.5" cy="262.5" r="4.4"/><circle cx="420.3" cy="299.2" r="4.4"/><circle cx="415.6" cy="332.8" r="4.4"/><circle cx="411.5" cy="361.9" r="4.4"/><circle cx="711.3" cy="394.4" r="4.4"/><circle cx="586.5" cy="441.6" r="4.4"/><circle cx="487.8" cy="479.0" r="4.4"/><circle cx="441.9" cy="496.4" r="4.4"/><circle cx="717.5" cy="379.5" r="4.4"/><circle cx="702.0" cy="386.0" r="4.4"/><circle cx="649.4" cy="407.9" r="4.4"/><circle cx="583.2" cy="435.5" r="4.4"/><circle cx="527.1" cy="458.9" r="4.4"/><circle cx="487.1" cy="475.5" r="4.4"/><circle cx="460.0" cy="486.8" r="4.4"/><circle cx="441.7" cy="494.4" r="4.4"/><circle cx="429.2" cy="499.7" r="4.4"/><circle cx="626.5" cy="303.7" r="4.4"/><circle cx="533.2" cy="226.0" r="4.4"/><circle cx="501.0" cy="205.1" r="4.4"/><circle cx="480.8" cy="182.4" r="4.4"/><circle cx="479.8" cy="186.0" r="4.4"/><circle cx="475.8" cy="200.9" r="4.4"/><circle cx="468.6" cy="227.3" r="4.4"/><circle cx="459.3" cy="261.3" r="4.4"/><circle cx="449.3" cy="297.9" r="4.4"/><circle cx="439.8" cy="332.8" r="4.4"/><circle cx="431.4" cy="363.5" r="4.4"/><circle cx="424.3" cy="389.5" r="4.4"/><circle cx="464.6" cy="172.3" r="4.4"/><circle cx="457.2" cy="206.5" r="4.4"/><circle cx="443.3" cy="270.0" r="4.4"/><circle cx="429.2" cy="335.2" r="4.4"/><circle cx="718.0" cy="391.9" r="4.4"/><circle cx="681.5" cy="405.7" r="4.4"/><circle cx="627.8" cy="426.0" r="4.4"/><circle cx="573.6" cy="446.5" r="4.4"/><circle cx="494.8" cy="476.3" r="4.4"/><circle cx="470.0" cy="485.7" r="4.4"/><circle cx="452.1" cy="492.5" r="4.4"/><circle cx="721.7" cy="383.0" r="4.4"/><circle cx="712.2" cy="386.9" r="4.4"/><circle cx="677.0" cy="401.0" r="4.4"/><circle cx="624.8" cy="421.9" r="4.4"/><circle cx="571.9" cy="443.1" r="4.4"/><circle cx="527.8" cy="460.8" r="4.4"/><circle cx="494.3" cy="474.2" r="4.4"/><circle cx="469.7" cy="484.0" r="4.4"/><circle cx="451.9" cy="491.2" r="4.4"/><circle cx="698.0" cy="363.2" r="4.4"/><circle cx="659.4" cy="331.1" r="4.4"/><circle cx="615.6" cy="294.6" r="4.4"/><circle cx="540.5" cy="232.1" r="4.4"/><circle cx="538.7" cy="235.5" r="4.4"/><circle cx="513.7" cy="209.7" r="4.4"/><circle cx="512.5" cy="212.6" r="4.4"/><circle cx="493.0" cy="192.5" r="4.4"/><circle cx="492.2" cy="195.0" r="4.4"/><circle cx="721.4" cy="390.6" r="4.4"/><circle cx="565.4" cy="449.6" r="4.4"/><circle cx="499.7" cy="474.5" r="4.4"/><circle cx="723.9" cy="384.8" r="4.4"/><circle cx="717.6" cy="387.3" r="4.4"/><circle cx="693.2" cy="396.9" r="4.4"/><circle cx="653.3" cy="412.6" r="4.4"/><circle cx="607.5" cy="430.6" r="4.4"/><circle cx="564.4" cy="447.5" r="4.4"/><circle cx="528.1" cy="461.7" r="4.4"/><circle cx="499.4" cy="473.0" r="4.4"/><circle cx="477.2" cy="481.7" r="4.4"/><circle cx="702.2" cy="374.1" r="4.4"/><circle cx="643.4" cy="400.8" r="4.4"/><circle cx="560.2" cy="438.6" r="4.4"/><circle cx="497.9" cy="467.0" r="4.4"/><circle cx="608.4" cy="288.6" r="4.4"/><circle cx="605.8" cy="291.3" r="4.4"/><circle cx="572.8" cy="263.1" r="4.4"/><circle cx="545.7" cy="236.4" r="4.4"/><circle cx="544.4" cy="238.7" r="4.4"/><circle cx="521.0" cy="218.6" r="4.4"/><circle cx="723.4" cy="389.9" r="4.4"/><circle cx="705.5" cy="396.6" r="4.4"/><circle cx="674.5" cy="408.4" r="4.4"/><circle cx="635.8" cy="423.0" r="4.4"/><circle cx="596.1" cy="438.0" r="4.4"/><circle cx="559.7" cy="451.8" r="4.4"/><circle cx="503.4" cy="473.1" r="4.4"/><circle cx="725.1" cy="385.9" r="4.4"/><circle cx="720.7" cy="387.6" r="4.4"/><circle cx="703.1" cy="394.4" r="4.4"/><circle cx="672.6" cy="406.3" r="4.4"/><circle cx="634.4" cy="421.1" r="4.4"/><circle cx="595.1" cy="436.4" r="4.4"/><circle cx="559.0" cy="450.3" r="4.4"/><circle cx="528.3" cy="462.3" r="4.4"/><circle cx="503.2" cy="472.0" r="4.4"/><circle cx="713.8" cy="376.4" r="4.4"/><circle cx="709.7" cy="378.2" r="4.4"/><circle cx="693.3" cy="385.3" r="4.4"/><circle cx="664.6" cy="397.6" r="4.4"/><circle cx="628.5" cy="413.2" r="4.4"/><circle cx="591.0" cy="429.4" r="4.4"/><circle cx="556.3" cy="444.3" r="4.4"/><circle cx="526.6" cy="457.1" r="4.4"/><circle cx="502.0" cy="467.7" r="4.4"/><circle cx="693.2" cy="359.2" r="4.4"/><circle cx="665.5" cy="336.2" r="4.4"/><circle cx="634.4" cy="310.3" r="4.4"/><circle cx="632.1" cy="312.2" r="4.4"/><circle cx="603.3" cy="284.4" r="4.4"/><circle cx="601.6" cy="286.3" r="4.4"/><circle cx="573.4" cy="262.3" r="4.4"/><circle cx="549.5" cy="239.6" r="4.4"/><circle cx="548.6" cy="241.2" r="4.4"/><circle cx="724.6" cy="389.4" r="4.4"/><circle cx="687.4" cy="403.5" r="4.4"/><circle cx="620.8" cy="428.7" r="4.4"/><circle cx="555.5" cy="453.4" r="4.4"/><circle cx="725.9" cy="386.5" r="4.4"/><circle cx="722.6" cy="387.7" r="4.4"/><circle cx="709.5" cy="392.8" r="4.4"/><circle cx="685.8" cy="401.9" r="4.4"/><circle cx="654.5" cy="414.0" r="4.4"/><circle cx="619.8" cy="427.4" r="4.4"/><circle cx="585.9" cy="440.5" r="4.4"/><circle cx="555.1" cy="452.3" r="4.4"/><circle cx="528.4" cy="462.6" r="4.4"/><circle cx="714.5" cy="380.8" r="4.4"/><circle cx="679.4" cy="395.4" r="4.4"/><circle cx="616.0" cy="421.8" r="4.4"/><circle cx="553.2" cy="448.0" r="4.4"/><circle cx="701.9" cy="366.5" r="4.4"/><circle cx="677.6" cy="349.6" r="4.4"/><circle cx="654.0" cy="326.6" r="4.4"/><circle cx="652.1" cy="328.0" r="4.4"/><circle cx="624.9" cy="305.1" r="4.4"/><circle cx="599.6" cy="281.3" r="4.4"/><circle cx="598.4" cy="282.6" r="4.4"/><circle cx="573.7" cy="261.8" r="4.4"/></g><g fill-opacity="0.92" stroke="#000" stroke-opacity="0.9" stroke-width="1.3"><circle cx="496.2" cy="368.9" r="4.4" fill="#1f1f1f"/><circle cx="427.6" cy="463.8" r="4.4" fill="#1f1f3f"/><circle cx="406.1" cy="493.4" r="4.4" fill="#1f1f5f"/><circle cx="625.7" cy="379.7" r="4.4" fill="#3f1f1f"/><circle cx="520.8" cy="440.3" r="4.4" fill="#3f1f3f"/><circle cx="458.6" cy="476.3" r="4.4" fill="#3f1f5f"/><circle cx="428.9" cy="493.4" r="4.4" fill="#3f1f7f"/><circle cx="414.0" cy="502.0" r="4.4" fill="#3f1f9f"/><circle cx="552.0" cy="291.8" r="4.4" fill="#3f3f1f"/><circle cx="496.2" cy="368.9" r="4.4" fill="#3f3f3f"/><circle cx="452.5" cy="429.4" r="4.4" fill="#3f3f5f"/><circle cx="427.6" cy="463.8" r="4.4" fill="#3f3f7f"/><circle cx="414.0" cy="482.6" r="4.4" fill="#3f3f9f"/><circle cx="406.1" cy="493.4" r="4.4" fill="#3f3fbf"/><circle cx="401.4" cy="500.0" r="4.4" fill="#3f3fdf"/><circle cx="494.5" cy="223.2" r="4.4" fill="#3f5f1f"/><circle cx="469.9" cy="292.2" r="4.4" fill="#3f5f3f"/><circle cx="444.0" cy="364.6" r="4.4" fill="#3f5f5f"/><circle cx="425.5" cy="416.2" r="4.4" fill="#3f5f7f"/><circle cx="627.0" cy="332.9" r="4.4" fill="#5f3f1f"/><circle cx="572.1" cy="375.2" r="4.4" fill="#5f3f3f"/><circle cx="513.9" cy="420.2" r="4.4" fill="#5f3f5f"/><circle cx="471.9" cy="452.6" r="4.4" fill="#5f3f7f"/><circle cx="445.3" cy="473.2" r="4.4" fill="#5f3f9f"/><circle cx="428.6" cy="486.1" r="4.4" fill="#5f3fbf"/><circle cx="417.9" cy="494.3" r="4.4" fill="#5f3fdf"/><circle cx="410.8" cy="499.8" r="4.4" fill="#5f3fff"/><circle cx="565.4" cy="273.3" r="4.4" fill="#5f5f1f"/><circle cx="534.4" cy="316.2" r="4.4" fill="#5f5f3f"/><circle cx="496.2" cy="368.9" r="4.4" fill="#5f5f5f"/><circle cx="464.7" cy="412.6" r="4.4" fill="#5f5f7f"/><circle cx="442.4" cy="443.3" r="4.4" fill="#5f5f9f"/><circle cx="427.6" cy="463.8" r="4.4" fill="#5f5fbf"/><circle cx="417.7" cy="477.5" r="4.4" fill="#5f5fdf"/><circle cx="410.9" cy="486.9" r="4.4" fill="#5f5fff"/><circle cx="517.3" cy="226.8" r="4.4" fill="#5f7f1f"/><circle cx="501.0" cy="263.9" r="4.4" fill="#5f7f3f"/><circle cx="478.0" cy="315.9" r="4.4" fill="#5f7f5f"/><circle cx="456.1" cy="365.6" r="4.4" fill="#5f7f7f"/><circle cx="438.8" cy="404.8" r="4.4" fill="#5f7f9f"/><circle cx="426.2" cy="433.4" r="4.4" fill="#5f7fbf"/><circle cx="417.3" cy="453.6" r="4.4" fill="#5f7fdf"/><circle cx="411.0" cy="468.0" r="4.4" fill="#5f7fff"/><circle cx="485.0" cy="195.5" r="4.4" fill="#5f9f1f"/><circle cx="476.2" cy="225.1" r="4.4" fill="#5f9f3f"/><circle cx="462.6" cy="271.0" r="4.4" fill="#5f9f5f"/><circle cx="667.9" cy="355.3" r="4.4" fill="#7f3f1f"/><circle cx="625.7" cy="379.7" r="4.4" fill="#7f3f3f"/><circle cx="570.1" cy="411.8" r="4.4" fill="#7f3f5f"/><circle cx="520.8" cy="440.3" r="4.4" fill="#7f3f7f"/><circle cx="484.1" cy="461.5" r="4.4" fill="#7f3f9f"/><circle cx="458.6" cy="476.3" r="4.4" fill="#7f3fbf"/><circle cx="441.1" cy="486.4" r="4.4" fill="#7f3fdf"/><circle cx="428.9" cy="493.4" r="4.4" fill="#7f3fff"/><circle cx="618.5" cy="310.9" r="4.4" fill="#7f5f1f"/><circle cx="589.7" cy="336.7" r="4.4" fill="#7f5f3f"/><circle cx="548.9" cy="373.3" r="4.4" fill="#7f5f5f"/><circle cx="509.8" cy="408.4" r="4.4" fill="#7f5f7f"/><circle cx="478.7" cy="436.3" r="4.4" fill="#7f5f9f"/><circle cx="456.0" cy="456.6" r="4.4" fill="#7f5fbf"/><circle cx="439.9" cy="471.1" r="4.4" fill="#7f5fdf"/><circle cx="428.4" cy="481.4" r="4.4" fill="#7f5fff"/><circle cx="569.9" cy="267.1" r="4.4" fill="#7f7f1f"/><circle cx="552.0" cy="291.8" r="4.4" fill="#7f7f3f"/><circle cx="524.8" cy="329.4" r="4.4" fill="#7f7f5f"/><circle cx="496.2" cy="368.9" r="4.4" fill="#7f7f7f"/><circle cx="471.6" cy="402.9" r="4.4" fill="#7f7f9f"/><circle cx="452.5" cy="429.4" r="4.4" fill="#7f7fbf"/><circle cx="438.1" cy="449.2" r="4.4" fill="#7f7fdf"/><circle cx="427.6" cy="463.8" r="4.4" fill="#7f7fff"/><circle cx="530.4" cy="231.6" r="4.4" fill="#7f9f1f"/><circle cx="519.7" cy="253.2" r="4.4" fill="#7f9f3f"/><circle cx="502.3" cy="288.5" r="4.4" fill="#7f9f5f"/><circle cx="482.4" cy="328.7" r="4.4" fill="#7f9f7f"/><circle cx="463.8" cy="366.2" r="4.4" fill="#7f9f9f"/><circle cx="448.3" cy="397.7" r="4.4" fill="#7f9fbf"/><circle cx="436.0" cy="422.5" r="4.4" fill="#7f9fdf"/><circle cx="426.6" cy="441.5" r="4.4" fill="#7f9fff"/><circle cx="494.5" cy="223.2" r="4.4" fill="#7fbf3f"/><circle cx="483.4" cy="254.3" r="4.4" fill="#7fbf5f"/><circle cx="469.9" cy="292.2" r="4.4" fill="#7fbf7f"/><circle cx="456.2" cy="330.4" r="4.4" fill="#7fbf9f"/><circle cx="444.0" cy="364.6" r="4.4" fill="#7fbfbf"/><circle cx="433.7" cy="393.2" r="4.4" fill="#7fbfdf"/><circle cx="425.5" cy="416.2" r="4.4" fill="#7fbfff"/><circle cx="689.8" cy="367.3" r="4.4" fill="#9f3f1f"/><circle cx="659.2" cy="382.5" r="4.4" fill="#9f3f3f"/><circle cx="613.0" cy="405.4" r="4.4" fill="#9f3f5f"/><circle cx="565.0" cy="429.2" r="4.4" fill="#9f3f7f"/><circle cx="523.9" cy="449.5" r="4.4" fill="#9f3f9f"/><circle cx="492.2" cy="465.3" r="4.4" fill="#9f3fbf"/><circle cx="468.6" cy="477.0" r="4.4" fill="#9f3fdf"/><circle cx="451.3" cy="485.6" r="4.4" fill="#9f3fff"/><circle cx="653.2" cy="335.4" r="4.4" fill="#9f5f1f"/><circle cx="629.6" cy="351.6" r="4.4" fill="#9f5f3f"/><circle cx="592.6" cy="376.9" r="4.4" fill="#9f5f5f"/><circle cx="552.5" cy="404.4" r="4.4" fill="#9f5f7f"/><circle cx="516.9" cy="428.9" r="4.4" fill="#9f5f9f"/><circle cx="488.3" cy="448.5" r="4.4" fill="#9f5fbf"/><circle cx="466.5" cy="463.5" r="4.4" fill="#9f5fdf"/><circle cx="450.1" cy="474.7" r="4.4" fill="#9f5fff"/><circle cx="611.3" cy="298.8" r="4.4" fill="#9f7f1f"/><circle cx="594.6" cy="315.2" r="4.4" fill="#9f7f3f"/><circle cx="567.5" cy="341.8" r="4.4" fill="#9f7f5f"/><circle cx="536.4" cy="372.3" r="4.4" fill="#9f7f7f"/><circle cx="507.2" cy="400.9" r="4.4" fill="#9f7f9f"/><circle cx="482.7" cy="424.9" r="4.4" fill="#9f7fbf"/><circle cx="463.4" cy="443.9" r="4.4" fill="#9f7fdf"/><circle cx="448.4" cy="458.5" r="4.4" fill="#9f7fff"/><circle cx="571.8" cy="264.4" r="4.4" fill="#9f9f1f"/><circle cx="560.7" cy="279.8" r="4.4" fill="#9f9f3f"/><circle cx="541.8" cy="306.0" r="4.4" fill="#9f9f5f"/><circle cx="519.0" cy="337.5" r="4.4" fill="#9f9f7f"/><circle cx="496.2" cy="368.9" r="4.4" fill="#9f9f9f"/><circle cx="476.1" cy="396.7" r="4.4" fill="#9f9fbf"/><circle cx="459.5" cy="419.7" r="4.4" fill="#9f9fdf"/><circle cx="446.2" cy="438.1" r="4.4" fill="#9f9fff"/><circle cx="531.4" cy="249.3" r="4.4" fill="#9fbf3f"/><circle cx="518.6" cy="273.5" r="4.4" fill="#9fbf5f"/><circle cx="502.3" cy="304.2" r="4.4" fill="#9fbf7f"/><circle cx="485.1" cy="336.5" r="4.4" fill="#9fbf9f"/><circle cx="469.1" cy="366.7" r="4.4" fill="#9fbfbf"/><circle cx="455.2" cy="392.8" r="4.4" fill="#9fbfdf"/><circle cx="443.7" cy="414.5" r="4.4" fill="#9fbfff"/><circle cx="507.7" cy="224.6" r="4.4" fill="#9fdf3f"/><circle cx="498.9" cy="246.1" r="4.4" fill="#9fdf5f"/><circle cx="487.4" cy="274.6" r="4.4" fill="#9fdf7f"/><circle cx="474.7" cy="306.1" r="4.4" fill="#9fdf9f"/><circle cx="462.2" cy="337.1" r="4.4" fill="#9fdfbf"/><circle cx="450.8" cy="365.1" r="4.4" fill="#9fdfdf"/><circle cx="441.0" cy="389.4" r="4.4" fill="#9fdfff"/><circle cx="489.0" cy="205.1" r="4.4" fill="#9fff3f"/><circle cx="483.0" cy="223.9" r="4.4" fill="#9fff5f"/><circle cx="474.8" cy="249.5" r="4.4" fill="#9fff7f"/><circle cx="465.4" cy="279.1" r="4.4" fill="#9fff9f"/><circle cx="455.7" cy="309.5" r="4.4" fill="#9fffbf"/><circle cx="446.5" cy="338.2" r="4.4" fill="#9fffdf"/><circle cx="438.3" cy="364.1" r="4.4" fill="#9fffff"/><circle cx="675.3" cy="351.0" r="4.4" fill="#bf5f1f"/><circle cx="656.8" cy="361.7" r="4.4" fill="#bf5f3f"/><circle cx="625.7" cy="379.7" r="4.4" fill="#bf5f5f"/><circle cx="588.7" cy="401.1" r="4.4" fill="#bf5f7f"/><circle cx="552.4" cy="422.0" r="4.4" fill="#bf5f9f"/><circle cx="520.8" cy="440.3" r="4.4" fill="#bf5fbf"/><circle cx="494.9" cy="455.3" r="4.4" fill="#bf5fdf"/><circle cx="474.5" cy="467.1" r="4.4" fill="#bf5fff"/><circle cx="641.3" cy="321.8" r="4.4" fill="#bf7f1f"/><circle cx="627.0" cy="332.9" r="4.4" fill="#bf7f3f"/><circle cx="602.4" cy="351.9" r="4.4" fill="#bf7f5f"/><circle cx="572.1" cy="375.2" r="4.4" fill="#bf7f7f"/><circle cx="541.5" cy="398.9" r="4.4" fill="#bf7f9f"/><circle cx="513.9" cy="420.2" r="4.4" fill="#bf7fbf"/><circle cx="490.7" cy="438.1" r="4.4" fill="#bf7fdf"/><circle cx="471.9" cy="452.6" r="4.4" fill="#bf7fff"/><circle cx="595.3" cy="302.2" r="4.4" fill="#bf9f3f"/><circle cx="576.8" cy="321.4" r="4.4" fill="#bf9f5f"/><circle cx="553.4" cy="345.9" r="4.4" fill="#bf9f7f"/><circle cx="528.6" cy="371.6" r="4.4" fill="#bf9f9f"/><circle cx="505.4" cy="395.7" r="4.4" fill="#bf9fbf"/><circle cx="485.3" cy="416.7" r="4.4" fill="#bf9fdf"/><circle cx="468.6" cy="434.1" r="4.4" fill="#bf9fff"/><circle cx="565.4" cy="273.3" r="4.4" fill="#bfbf3f"/><circle cx="552.0" cy="291.8" r="4.4" fill="#bfbf5f"/><circle cx="534.4" cy="316.2" r="4.4" fill="#bfbf7f"/><circle cx="515.1" cy="342.9" r="4.4" fill="#bfbf9f"/><circle cx="496.2" cy="368.9" r="4.4" fill="#bfbfbf"/><circle cx="479.3" cy="392.4" r="4.4" fill="#bfbfdf"/><circle cx="464.7" cy="412.6" r="4.4" fill="#bfbfff"/><circle cx="539.2" cy="248.0" r="4.4" fill="#bfdf3f"/><circle cx="529.7" cy="265.2" r="4.4" fill="#bfdf5f"/><circle cx="516.7" cy="288.4" r="4.4" fill="#bfdf7f"/><circle cx="501.9" cy="315.0" r="4.4" fill="#bfdf9f"/><circle cx="486.9" cy="341.8" r="4.4" fill="#bfdfbf"/><circle cx="472.9" cy="367.0" r="4.4" fill="#bfdfdf"/><circle cx="460.4" cy="389.3" r="4.4" fill="#bfdfff"/><circle cx="517.3" cy="226.8" r="4.4" fill="#bfff3f"/><circle cx="510.5" cy="242.3" r="4.4" fill="#bfff5f"/><circle cx="501.0" cy="263.9" r="4.4" fill="#bfff7f"/><circle cx="489.8" cy="289.3" r="4.4" fill="#bfff9f"/><circle cx="478.0" cy="315.9" r="4.4" fill="#bfffbf"/><circle cx="466.6" cy="341.8" r="4.4" fill="#bfffdf"/><circle cx="456.1" cy="365.6" r="4.4" fill="#bfffff"/><circle cx="689.6" cy="361.1" r="4.4" fill="#df5f1f"/><circle cx="675.2" cy="368.5" r="4.4" fill="#df5f3f"/><circle cx="649.8" cy="381.7" r="4.4" fill="#df5f5f"/><circle cx="617.4" cy="398.4" r="4.4" fill="#df5f7f"/><circle cx="583.2" cy="416.1" r="4.4" fill="#df5f9f"/><circle cx="551.1" cy="432.7" r="4.4" fill="#df5fbf"/><circle cx="523.1" cy="447.1" r="4.4" fill="#df5fdf"/><circle cx="499.8" cy="459.2" r="4.4" fill="#df5fff"/><circle cx="662.5" cy="338.1" r="4.4" fill="#df7f1f"/><circle cx="650.6" cy="345.8" r="4.4" fill="#df7f3f"/><circle cx="629.4" cy="359.7" r="4.4" fill="#df7f5f"/><circle cx="601.8" cy="377.7" r="4.4" fill="#df7f7f"/><circle cx="572.0" cy="397.1" r="4.4" fill="#df7f9f"/><circle cx="543.5" cy="415.8" r="4.4" fill="#df7fbf"/><circle cx="518.0" cy="432.4" r="4.4" fill="#df7fdf"/><circle cx="496.5" cy="446.4" r="4.4" fill="#df7fff"/><circle cx="622.8" cy="320.0" r="4.4" fill="#df9f3f"/><circle cx="605.9" cy="334.3" r="4.4" fill="#df9f5f"/><circle cx="583.4" cy="353.1" r="4.4" fill="#df9f7f"/><circle cx="558.5" cy="374.1" r="4.4" fill="#df9f9f"/><circle cx="534.0" cy="394.7" r="4.4" fill="#df9fbf"/><circle cx="511.6" cy="413.6" r="4.4" fill="#df9fdf"/><circle cx="492.2" cy="429.9" r="4.4" fill="#df9fff"/><circle cx="594.5" cy="293.9" r="4.4" fill="#dfbf3f"/><circle cx="581.6" cy="308.0" r="4.4" fill="#dfbf5f"/><circle cx="563.9" cy="327.2" r="4.4" fill="#dfbf7f"/><circle cx="543.8" cy="349.0" r="4.4" fill="#dfbf9f"/><circle cx="523.3" cy="371.2" r="4.4" fill="#dfbfbf"/><circle cx="504.2" cy="392.0" r="4.4" fill="#dfbfdf"/><circle cx="487.1" cy="410.5" r="4.4" fill="#dfbfff"/><circle cx="568.2" cy="269.5" r="4.4" fill="#dfdf3f"/><circle cx="558.4" cy="283.0" r="4.4" fill="#dfdf5f"/><circle cx="544.8" cy="301.7" r="4.4" fill="#dfdf7f"/><circle cx="528.9" cy="323.7" r="4.4" fill="#dfdf9f"/><circle cx="512.3" cy="346.7" r="4.4" fill="#dfdfbf"/><circle cx="496.2" cy="368.9" r="4.4" fill="#dfdfdf"/><circle cx="481.5" cy="389.2" r="4.4" fill="#dfdfff"/><circle cx="544.8" cy="247.9" r="4.4" fill="#dfff3f"/><circle cx="537.5" cy="260.4" r="4.4" fill="#dfff5f"/><circle cx="527.2" cy="278.2" r="4.4" fill="#dfff7f"/><circle cx="514.8" cy="299.7" r="4.4" fill="#dfff9f"/><circle cx="501.5" cy="322.7" r="4.4" fill="#dfffbf"/><circle cx="488.2" cy="345.6" r="4.4" fill="#dfffdf"/><circle cx="475.8" cy="367.2" r="4.4" fill="#dfffff"/><circle cx="699.1" cy="367.8" r="4.4" fill="#ff5f1f"/><circle cx="687.8" cy="373.3" r="4.4" fill="#ff5f3f"/><circle cx="667.2" cy="383.1" r="4.4" fill="#ff5f5f"/><circle cx="639.7" cy="396.3" r="4.4" fill="#ff5f7f"/><circle cx="608.7" cy="411.2" r="4.4" fill="#ff5f9f"/><circle cx="577.9" cy="425.9" r="4.4" fill="#ff5fbf"/><circle cx="549.5" cy="439.6" r="4.4" fill="#ff5fdf"/><circle cx="524.6" cy="451.5" r="4.4" fill="#ff5fff"/><circle cx="667.9" cy="355.3" r="4.4" fill="#ff7f3f"/><circle cx="650.0" cy="365.6" r="4.4" fill="#ff7f5f"/><circle cx="625.7" cy="379.7" r="4.4" fill="#ff7f7f"/><circle cx="598.1" cy="395.6" r="4.4" fill="#ff7f9f"/><circle cx="570.1" cy="411.8" r="4.4" fill="#ff7fbf"/><circle cx="544.0" cy="426.9" r="4.4" fill="#ff7fdf"/><circle cx="520.8" cy="440.3" r="4.4" fill="#ff7fff"/><circle cx="644.0" cy="333.8" r="4.4" fill="#ff9f3f"/><circle cx="629.1" cy="344.5" r="4.4" fill="#ff9f5f"/><circle cx="608.5" cy="359.2" r="4.4" fill="#ff9f7f"/><circle cx="584.8" cy="376.3" r="4.4" fill="#ff9f9f"/><circle cx="560.2" cy="393.9" r="4.4" fill="#ff9fbf"/><circle cx="536.9" cy="410.6" r="4.4" fill="#ff9fdf"/><circle cx="515.8" cy="425.7" r="4.4" fill="#ff9fff"/><circle cx="618.5" cy="310.9" r="4.4" fill="#ffbf3f"/><circle cx="606.5" cy="321.7" r="4.4" fill="#ffbf5f"/><circle cx="589.7" cy="336.7" r="4.4" fill="#ffbf7f"/><circle cx="569.8" cy="354.5" r="4.4" fill="#ffbf9f"/><circle cx="548.9" cy="373.3" r="4.4" fill="#ffbfbf"/><circle cx="528.6" cy="391.6" r="4.4" fill="#ffbfdf"/><circle cx="509.8" cy="408.4" r="4.4" fill="#ffbfff"/><circle cx="593.4" cy="288.2" r="4.4" fill="#ffdf3f"/><circle cx="583.9" cy="298.8" r="4.4" fill="#ffdf5f"/><circle cx="570.5" cy="313.8" r="4.4" fill="#ffdf7f"/><circle cx="554.3" cy="331.9" r="4.4" fill="#ffdf9f"/><circle cx="536.9" cy="351.4" r="4.4" fill="#ffdfbf"/><circle cx="519.5" cy="370.9" r="4.4" fill="#ffdfdf"/><circle cx="503.2" cy="389.1" r="4.4" fill="#ffdfff"/><circle cx="569.9" cy="267.1" r="4.4" fill="#ffff3f"/><circle cx="562.6" cy="277.2" r="4.4" fill="#ffff5f"/><circle cx="552.0" cy="291.8" r="4.4" fill="#ffff7f"/><circle cx="539.1" cy="309.7" r="4.4" fill="#ffff9f"/><circle cx="524.8" cy="329.4" r="4.4" fill="#ffffbf"/><circle cx="510.3" cy="349.6" r="4.4" fill="#ffffdf"/></g><path d="M702.9 370.3 L483.5 192.1 L397.1 510.6 Z" fill="none" stroke="#000" stroke-width="2.3"/><circle cx="702.9" cy="370.3" r="4.4" fill="#f00" stroke="#400" stroke-width="1"/><circle cx="483.5" cy="192.1" r="4.4" fill="#078a12" stroke="#021" stroke-width="1"/><circle cx="397.1" cy="510.6" r="4.4" fill="#00f" stroke="#004" stroke-width="1"/><rect x="303" y="539" width="10" height="1" fill="#111"/><text x="301.5" y="544.0" text-anchor="end" class="tk">0</text><rect x="303" y="487" width="10" height="1" fill="#111"/><text x="301.5" y="492.0" text-anchor="end" class="tk">0.1</text><rect x="303" y="435" width="10" height="1" fill="#111"/><text x="301.5" y="440.0" text-anchor="end" class="tk">0.2</text><rect x="303" y="383" width="10" height="1" fill="#111"/><text x="301.5" y="388.0" text-anchor="end" class="tk">0.3</text><rect x="303" y="331" width="10" height="1" fill="#111"/><text x="301.5" y="336.0" text-anchor="end" class="tk">0.4</text><rect x="303" y="279" width="10" height="1" fill="#111"/><text x="301.5" y="284.0" text-anchor="end" class="tk">0.5</text><rect x="303" y="227" width="10" height="1" fill="#111"/><text x="301.5" y="232.0" text-anchor="end" class="tk">0.6</text><rect x="303" y="175" width="10" height="1" fill="#111"/><text x="301.5" y="180.0" text-anchor="end" class="tk">0.7</text><rect x="303" y="123" width="10" height="1" fill="#111"/><text x="301.5" y="128.0" text-anchor="end" class="tk">0.8</text><rect x="303" y="71" width="10" height="1" fill="#111"/><text x="301.5" y="76.0" text-anchor="end" class="tk">0.9</text><rect x="312" y="540" width="1" height="10" fill="#222"/><text x="313.0" y="564" text-anchor="middle" class="tk">0</text><rect x="371" y="540" width="1" height="10" fill="#222"/><text x="371.6" y="564" text-anchor="middle" class="tk">0.1</text><rect x="430" y="540" width="1" height="10" fill="#222"/><text x="430.2" y="564" text-anchor="middle" class="tk">0.2</text><rect x="488" y="540" width="1" height="10" fill="#222"/><text x="488.8" y="564" text-anchor="middle" class="tk">0.3</text><rect x="547" y="540" width="1" height="10" fill="#222"/><text x="547.4" y="564" text-anchor="middle" class="tk">0.4</text><rect x="606" y="540" width="1" height="10" fill="#222"/><text x="606.0" y="564" text-anchor="middle" class="tk">0.5</text><rect x="664" y="540" width="1" height="10" fill="#222"/><text x="664.6" y="564" text-anchor="middle" class="tk">0.6</text><rect x="723" y="540" width="1" height="10" fill="#222"/><text x="723.2" y="564" text-anchor="middle" class="tk">0.7</text><rect x="781" y="540" width="1" height="10" fill="#222"/><text x="781.8" y="564" text-anchor="middle" class="tk">0.8</text><text x="532.3" y="65.7" text-anchor="middle" class="ct">Chromaticity 1931</text></svg>
</body></html>
